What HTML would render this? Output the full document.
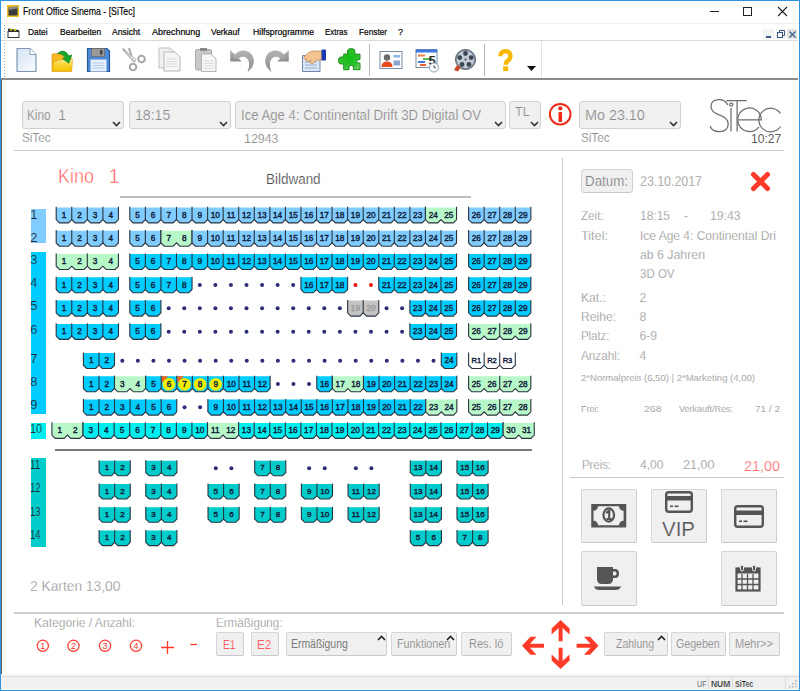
<!DOCTYPE html>
<html><head><meta charset="utf-8">
<style>
html,body{margin:0;padding:0;}
body{width:800px;height:691px;position:relative;overflow:hidden;background:#fff;font-family:"Liberation Sans",sans-serif;}
.a{position:absolute;}
.t{position:absolute;white-space:pre;line-height:1;}
.dd{position:absolute;background:#f0f0f0;border:1px solid #d0d0d0;border-radius:3px;box-sizing:border-box;}
.btn{position:absolute;background:#f0f0f0;border:1px solid #d6d6d6;border-bottom-color:#c8c8c8;border-right-color:#cecece;border-radius:2px;box-sizing:border-box;}
</style></head><body>
<!-- window border -->
<div class="a" style="left:0;top:0;width:800px;height:1px;background:#2a94e0"></div>
<div class="a" style="left:0;top:0;width:1px;height:691px;background:#2a94e0"></div>
<div class="a" style="left:799px;top:0;width:1px;height:691px;background:#2a94e0"></div>
<div class="a" style="left:0;top:690px;width:800px;height:1px;background:#2a94e0"></div>

<!-- title bar -->
<svg class="a" style="left:7px;top:5px" width="12" height="12" viewBox="0 0 12 12">
 <rect x="0" y="0" width="12" height="12" fill="#e8c020"/>
 <rect x="1.5" y="2.5" width="9" height="8" fill="#3a3a3a"/>
 <path d="M1.5,2.5 L10.5,1 L10.5,3.5 L1.5,5 Z" fill="#8a8a8a"/>
</svg>
<div class="a" style="left:710px;top:11px;width:9px;height:1px;background:#222"></div>
<div class="a" style="left:743px;top:7px;width:9px;height:9px;border:1px solid #222;box-sizing:border-box"></div>
<svg class="a" style="left:777px;top:6px" width="11" height="11" viewBox="0 0 11 11"><path d="M1,1 L10,10 M10,1 L1,10" stroke="#222" stroke-width="1.1"/></svg>

<!-- menu bar -->
<div class="a" style="left:1px;top:23px;width:797px;height:1px;background:#f0f0f0"></div>
<div class="a" style="left:4px;top:25px;width:1px;height:14px;background:repeating-linear-gradient(#a0a0a0 0 1px,transparent 1px 3px)"></div>
<svg class="a" style="left:7px;top:27px" width="13" height="11" viewBox="0 0 13 11">
 <rect x="1" y="4.5" width="11" height="6" fill="#fff" stroke="#333" stroke-width="1"/>
 <path d="M1,1.5 L12,3 L12,5 L1,4 Z" fill="#333"/>
 <rect x="3" y="1.5" width="2" height="2" fill="#d0c020"/><rect x="7" y="2" width="2" height="2" fill="#d0c020"/>
</svg>
<!-- mdi buttons -->
<div class="a" style="left:763px;top:29px;width:11px;height:10px;background:#f4f4f4"></div>
<div class="a" style="left:766px;top:36px;width:5px;height:1.5px;background:#3a5a8a"></div>
<div class="a" style="left:776px;top:29px;width:10px;height:10px;background:#f4f4f4"></div>
<svg class="a" style="left:777px;top:30px" width="8" height="8" viewBox="0 0 8 8"><rect x="0.5" y="2.5" width="5" height="5" fill="none" stroke="#3a5a8a"/><path d="M2.5,2.5 V0.5 H7.5 V5.5 H5.5" fill="none" stroke="#3a5a8a"/></svg>
<div class="a" style="left:787px;top:29px;width:10px;height:10px;background:#e2e2e2"></div>
<svg class="a" style="left:789px;top:31px" width="7" height="7" viewBox="0 0 7 7"><path d="M0.5,0.5 L6.5,6.5 M6.5,0.5 L0.5,6.5" stroke="#3a5a8a" stroke-width="1.2"/></svg>
<div class="a" style="left:1px;top:40px;width:797px;height:1px;background:#dadada"></div>

<!-- toolbar -->
<div class="a" style="left:4px;top:43px;width:1px;height:34px;background:repeating-linear-gradient(#a0a0a0 0 1px,transparent 1px 3px)"></div>
<div class="a" style="left:369px;top:44px;width:1px;height:32px;background:#b8b8b8"></div>
<div class="a" style="left:484px;top:44px;width:1px;height:32px;background:#b8b8b8"></div>
<svg class="a" style="left:527px;top:66px" width="9" height="5" viewBox="0 0 9 5"><path d="M0,0 H9 L4.5,5 Z" fill="#111"/></svg>
<div class="a" style="left:541px;top:41px;width:1px;height:37px;background:#e4e4e4"></div>
<div class="a" style="left:1px;top:78px;width:797px;height:2px;background:#8a8a8a"></div>
<div class="a" style="left:1px;top:80px;width:1px;height:594px;background:#6a6058"></div>

<!-- top selectors -->
<div class="dd" style="left:22px;top:101px;width:102px;height:28px"></div>
<div class="dd" style="left:129px;top:101px;width:102px;height:28px"></div>
<div class="dd" style="left:235px;top:101px;width:271px;height:28px"></div>
<div class="dd" style="left:509px;top:101px;width:32px;height:28px"></div>
<div class="dd" style="left:579px;top:101px;width:102px;height:28px"></div>
<svg class="a" style="left:548px;top:102px" width="25" height="25" viewBox="0 0 25 25">
 <circle cx="12.2" cy="12.2" r="10.3" fill="none" stroke="#ee2a1a" stroke-width="2"/>
 <circle cx="12.3" cy="6.4" r="2.1" fill="#ee2a1a"/>
 <rect x="10.5" y="10" width="3.6" height="10" fill="#ee2a1a"/>
</svg>
<svg class="a" style="left:708px;top:97px" width="78" height="38" viewBox="0 -1 78 38">
 <g fill="none" stroke="#6e6e6e" stroke-width="1.25">
  <path d="M19.8,7 Q17.5,1.5 11,1.5 Q3,1.5 3,8.5 Q3,14 11,16.8 Q20.2,19.8 20.2,25.8 Q20.2,33.6 11.2,33.6 Q4,33.6 2,28"/>
  <path d="M23,10 V33.6"/>
  <circle cx="23.3" cy="6.6" r="1.6"/>
  <path d="M18.4,2.6 H38.7 M29.1,2.6 V33.6"/>
  <path d="M29.7,21.8 H53.3 A11.8,11.8 0 1 0 51,28.8"/>
  <path d="M72.5,15.5 A11.8,11.8 0 1 0 72.5,28.5"/>
 </g>
</svg>
<div class="a" style="left:14px;top:150px;width:770px;height:1px;background:#c8c8c8"></div>
<div class="a" style="left:562px;top:158px;width:1px;height:447px;background:#c8c8c8"></div>

<!-- seat plan -->
<div class="a" style="left:120px;top:196px;width:351px;height:2px;background:#bcbcbc"></div>
<div class="a" style="left:31px;top:209px;width:15px;height:34px;background:#80ccff"></div>
<div class="a" style="left:31px;top:252px;width:15px;height:162px;background:#00ccff"></div>
<div class="a" style="left:31px;top:423px;width:15px;height:16px;background:#00eeee"></div>
<div class="a" style="left:31px;top:458px;width:15px;height:89px;background:#00cccc"></div>
<div class="a" style="left:55px;top:449px;width:477px;height:2px;background:#7a7a7a"></div>
<svg class="a" style="left:0;top:0" width="800" height="691" viewBox="0 0 800 691" font-family="Liberation Sans, sans-serif">
<polygon points="56.20,207.40 56.20,219.60 59.50,222.90 68.46,222.90 71.76,219.60 71.76,219.60 75.06,222.90 84.02,222.90 87.32,219.60 87.32,219.60 90.62,222.90 99.58,222.90 102.88,219.60 102.88,219.60 106.18,222.90 115.14,222.90 118.44,219.60 118.44,207.40" fill="#80ccff"/>
<path d="M56.20,206.80 L56.20,219.60 L59.50,222.90 L68.46,222.90 L71.76,219.60 L75.06,222.90 L84.02,222.90 L87.32,219.60 L90.62,222.90 L99.58,222.90 L102.88,219.60 L106.18,222.90 L115.14,222.90 L118.44,219.60 L118.44,206.80" fill="none" stroke="#2a3440" stroke-width="1.1"/>
<line x1="71.76" y1="206.80" x2="71.76" y2="219.60" stroke="#2a3440" stroke-width="1.1"/>
<line x1="87.32" y1="206.80" x2="87.32" y2="219.60" stroke="#2a3440" stroke-width="1.1"/>
<line x1="102.88" y1="206.80" x2="102.88" y2="219.60" stroke="#2a3440" stroke-width="1.1"/>
<text x="63.98" y="217.75" font-size="8.2" text-anchor="middle" fill="#10203a" stroke="#10203a" stroke-width="0.4">1</text>
<text x="79.54" y="217.75" font-size="8.2" text-anchor="middle" fill="#10203a" stroke="#10203a" stroke-width="0.4">2</text>
<text x="95.10" y="217.75" font-size="8.2" text-anchor="middle" fill="#10203a" stroke="#10203a" stroke-width="0.4">3</text>
<text x="110.66" y="217.75" font-size="8.2" text-anchor="middle" fill="#10203a" stroke="#10203a" stroke-width="0.4">4</text>
<polygon points="129.80,207.40 129.80,219.60 133.10,222.90 142.06,222.90 145.36,219.60 145.36,219.60 148.66,222.90 157.62,222.90 160.92,219.60 160.92,219.60 164.22,222.90 173.18,222.90 176.48,219.60 176.48,219.60 179.78,222.90 188.74,222.90 192.04,219.60 192.04,219.60 195.34,222.90 204.30,222.90 207.60,219.60 207.60,219.60 210.90,222.90 219.86,222.90 223.16,219.60 223.16,219.60 226.46,222.90 235.42,222.90 238.72,219.60 238.72,219.60 242.02,222.90 250.98,222.90 254.28,219.60 254.28,219.60 257.58,222.90 266.54,222.90 269.84,219.60 269.84,219.60 273.14,222.90 282.10,222.90 285.40,219.60 285.40,219.60 288.70,222.90 297.66,222.90 300.96,219.60 300.96,219.60 304.26,222.90 313.22,222.90 316.52,219.60 316.52,219.60 319.82,222.90 328.78,222.90 332.08,219.60 332.08,219.60 335.38,222.90 344.34,222.90 347.64,219.60 347.64,219.60 350.94,222.90 359.90,222.90 363.20,219.60 363.20,219.60 366.50,222.90 375.46,222.90 378.76,219.60 378.76,219.60 382.06,222.90 391.02,222.90 394.32,219.60 394.32,219.60 397.62,222.90 406.58,222.90 409.88,219.60 409.88,219.60 413.18,222.90 422.14,222.90 425.44,219.60 425.44,207.40" fill="#80ccff"/>
<path d="M129.80,206.80 L129.80,219.60 L133.10,222.90 L142.06,222.90 L145.36,219.60 L148.66,222.90 L157.62,222.90 L160.92,219.60 L164.22,222.90 L173.18,222.90 L176.48,219.60 L179.78,222.90 L188.74,222.90 L192.04,219.60 L195.34,222.90 L204.30,222.90 L207.60,219.60 L210.90,222.90 L219.86,222.90 L223.16,219.60 L226.46,222.90 L235.42,222.90 L238.72,219.60 L242.02,222.90 L250.98,222.90 L254.28,219.60 L257.58,222.90 L266.54,222.90 L269.84,219.60 L273.14,222.90 L282.10,222.90 L285.40,219.60 L288.70,222.90 L297.66,222.90 L300.96,219.60 L304.26,222.90 L313.22,222.90 L316.52,219.60 L319.82,222.90 L328.78,222.90 L332.08,219.60 L335.38,222.90 L344.34,222.90 L347.64,219.60 L350.94,222.90 L359.90,222.90 L363.20,219.60 L366.50,222.90 L375.46,222.90 L378.76,219.60 L382.06,222.90 L391.02,222.90 L394.32,219.60 L397.62,222.90 L406.58,222.90 L409.88,219.60 L413.18,222.90 L422.14,222.90 L425.44,219.60 L425.44,206.80" fill="none" stroke="#2a3440" stroke-width="1.1"/>
<line x1="145.36" y1="206.80" x2="145.36" y2="219.60" stroke="#2a3440" stroke-width="1.1"/>
<line x1="160.92" y1="206.80" x2="160.92" y2="219.60" stroke="#2a3440" stroke-width="1.1"/>
<line x1="176.48" y1="206.80" x2="176.48" y2="219.60" stroke="#2a3440" stroke-width="1.1"/>
<line x1="192.04" y1="206.80" x2="192.04" y2="219.60" stroke="#2a3440" stroke-width="1.1"/>
<line x1="207.60" y1="206.80" x2="207.60" y2="219.60" stroke="#2a3440" stroke-width="1.1"/>
<line x1="223.16" y1="206.80" x2="223.16" y2="219.60" stroke="#2a3440" stroke-width="1.1"/>
<line x1="238.72" y1="206.80" x2="238.72" y2="219.60" stroke="#2a3440" stroke-width="1.1"/>
<line x1="254.28" y1="206.80" x2="254.28" y2="219.60" stroke="#2a3440" stroke-width="1.1"/>
<line x1="269.84" y1="206.80" x2="269.84" y2="219.60" stroke="#2a3440" stroke-width="1.1"/>
<line x1="285.40" y1="206.80" x2="285.40" y2="219.60" stroke="#2a3440" stroke-width="1.1"/>
<line x1="300.96" y1="206.80" x2="300.96" y2="219.60" stroke="#2a3440" stroke-width="1.1"/>
<line x1="316.52" y1="206.80" x2="316.52" y2="219.60" stroke="#2a3440" stroke-width="1.1"/>
<line x1="332.08" y1="206.80" x2="332.08" y2="219.60" stroke="#2a3440" stroke-width="1.1"/>
<line x1="347.64" y1="206.80" x2="347.64" y2="219.60" stroke="#2a3440" stroke-width="1.1"/>
<line x1="363.20" y1="206.80" x2="363.20" y2="219.60" stroke="#2a3440" stroke-width="1.1"/>
<line x1="378.76" y1="206.80" x2="378.76" y2="219.60" stroke="#2a3440" stroke-width="1.1"/>
<line x1="394.32" y1="206.80" x2="394.32" y2="219.60" stroke="#2a3440" stroke-width="1.1"/>
<line x1="409.88" y1="206.80" x2="409.88" y2="219.60" stroke="#2a3440" stroke-width="1.1"/>
<text x="137.58" y="217.75" font-size="8.2" text-anchor="middle" fill="#10203a" stroke="#10203a" stroke-width="0.4">5</text>
<text x="153.14" y="217.75" font-size="8.2" text-anchor="middle" fill="#10203a" stroke="#10203a" stroke-width="0.4">6</text>
<text x="168.70" y="217.75" font-size="8.2" text-anchor="middle" fill="#10203a" stroke="#10203a" stroke-width="0.4">7</text>
<text x="184.26" y="217.75" font-size="8.2" text-anchor="middle" fill="#10203a" stroke="#10203a" stroke-width="0.4">8</text>
<text x="199.82" y="217.75" font-size="8.2" text-anchor="middle" fill="#10203a" stroke="#10203a" stroke-width="0.4">9</text>
<text x="215.38" y="217.75" font-size="8.2" text-anchor="middle" fill="#10203a" stroke="#10203a" stroke-width="0.4">10</text>
<text x="230.94" y="217.75" font-size="8.2" text-anchor="middle" fill="#10203a" stroke="#10203a" stroke-width="0.4">11</text>
<text x="246.50" y="217.75" font-size="8.2" text-anchor="middle" fill="#10203a" stroke="#10203a" stroke-width="0.4">12</text>
<text x="262.06" y="217.75" font-size="8.2" text-anchor="middle" fill="#10203a" stroke="#10203a" stroke-width="0.4">13</text>
<text x="277.62" y="217.75" font-size="8.2" text-anchor="middle" fill="#10203a" stroke="#10203a" stroke-width="0.4">14</text>
<text x="293.18" y="217.75" font-size="8.2" text-anchor="middle" fill="#10203a" stroke="#10203a" stroke-width="0.4">15</text>
<text x="308.74" y="217.75" font-size="8.2" text-anchor="middle" fill="#10203a" stroke="#10203a" stroke-width="0.4">16</text>
<text x="324.30" y="217.75" font-size="8.2" text-anchor="middle" fill="#10203a" stroke="#10203a" stroke-width="0.4">17</text>
<text x="339.86" y="217.75" font-size="8.2" text-anchor="middle" fill="#10203a" stroke="#10203a" stroke-width="0.4">18</text>
<text x="355.42" y="217.75" font-size="8.2" text-anchor="middle" fill="#10203a" stroke="#10203a" stroke-width="0.4">19</text>
<text x="370.98" y="217.75" font-size="8.2" text-anchor="middle" fill="#10203a" stroke="#10203a" stroke-width="0.4">20</text>
<text x="386.54" y="217.75" font-size="8.2" text-anchor="middle" fill="#10203a" stroke="#10203a" stroke-width="0.4">21</text>
<text x="402.10" y="217.75" font-size="8.2" text-anchor="middle" fill="#10203a" stroke="#10203a" stroke-width="0.4">22</text>
<text x="417.66" y="217.75" font-size="8.2" text-anchor="middle" fill="#10203a" stroke="#10203a" stroke-width="0.4">23</text>
<polygon points="425.44,207.40 425.44,219.60 428.74,222.90 437.70,222.90 441.00,219.60 441.00,219.60 444.30,222.90 453.26,222.90 456.56,219.60 456.56,207.40" fill="#b8f8c8"/>
<path d="M425.44,206.80 L425.44,219.60 L428.74,222.90 L437.70,222.90 L441.00,219.60 L444.30,222.90 L453.26,222.90 L456.56,219.60 L456.56,206.80" fill="none" stroke="#2a3440" stroke-width="1.1"/>
<text x="433.22" y="217.75" font-size="8.2" text-anchor="middle" fill="#10203a" stroke="#10203a" stroke-width="0.4">24</text>
<text x="448.78" y="217.75" font-size="8.2" text-anchor="middle" fill="#10203a" stroke="#10203a" stroke-width="0.4">25</text>
<polygon points="468.60,207.40 468.60,219.60 471.90,222.90 480.86,222.90 484.16,219.60 484.16,219.60 487.46,222.90 496.42,222.90 499.72,219.60 499.72,219.60 503.02,222.90 511.98,222.90 515.28,219.60 515.28,219.60 518.58,222.90 527.54,222.90 530.84,219.60 530.84,207.40" fill="#80ccff"/>
<path d="M468.60,206.80 L468.60,219.60 L471.90,222.90 L480.86,222.90 L484.16,219.60 L487.46,222.90 L496.42,222.90 L499.72,219.60 L503.02,222.90 L511.98,222.90 L515.28,219.60 L518.58,222.90 L527.54,222.90 L530.84,219.60 L530.84,206.80" fill="none" stroke="#2a3440" stroke-width="1.1"/>
<line x1="484.16" y1="206.80" x2="484.16" y2="219.60" stroke="#2a3440" stroke-width="1.1"/>
<line x1="499.72" y1="206.80" x2="499.72" y2="219.60" stroke="#2a3440" stroke-width="1.1"/>
<line x1="515.28" y1="206.80" x2="515.28" y2="219.60" stroke="#2a3440" stroke-width="1.1"/>
<text x="476.38" y="217.75" font-size="8.2" text-anchor="middle" fill="#10203a" stroke="#10203a" stroke-width="0.4">26</text>
<text x="491.94" y="217.75" font-size="8.2" text-anchor="middle" fill="#10203a" stroke="#10203a" stroke-width="0.4">27</text>
<text x="507.50" y="217.75" font-size="8.2" text-anchor="middle" fill="#10203a" stroke="#10203a" stroke-width="0.4">28</text>
<text x="523.06" y="217.75" font-size="8.2" text-anchor="middle" fill="#10203a" stroke="#10203a" stroke-width="0.4">29</text>
<polygon points="56.20,230.70 56.20,242.90 59.50,246.20 68.46,246.20 71.76,242.90 71.76,242.90 75.06,246.20 84.02,246.20 87.32,242.90 87.32,242.90 90.62,246.20 99.58,246.20 102.88,242.90 102.88,242.90 106.18,246.20 115.14,246.20 118.44,242.90 118.44,230.70" fill="#80ccff"/>
<path d="M56.20,230.10 L56.20,242.90 L59.50,246.20 L68.46,246.20 L71.76,242.90 L75.06,246.20 L84.02,246.20 L87.32,242.90 L90.62,246.20 L99.58,246.20 L102.88,242.90 L106.18,246.20 L115.14,246.20 L118.44,242.90 L118.44,230.10" fill="none" stroke="#2a3440" stroke-width="1.1"/>
<line x1="71.76" y1="230.10" x2="71.76" y2="242.90" stroke="#2a3440" stroke-width="1.1"/>
<line x1="87.32" y1="230.10" x2="87.32" y2="242.90" stroke="#2a3440" stroke-width="1.1"/>
<line x1="102.88" y1="230.10" x2="102.88" y2="242.90" stroke="#2a3440" stroke-width="1.1"/>
<text x="63.98" y="241.05" font-size="8.2" text-anchor="middle" fill="#10203a" stroke="#10203a" stroke-width="0.4">1</text>
<text x="79.54" y="241.05" font-size="8.2" text-anchor="middle" fill="#10203a" stroke="#10203a" stroke-width="0.4">2</text>
<text x="95.10" y="241.05" font-size="8.2" text-anchor="middle" fill="#10203a" stroke="#10203a" stroke-width="0.4">3</text>
<text x="110.66" y="241.05" font-size="8.2" text-anchor="middle" fill="#10203a" stroke="#10203a" stroke-width="0.4">4</text>
<polygon points="129.80,230.70 129.80,242.90 133.10,246.20 142.06,246.20 145.36,242.90 145.36,242.90 148.66,246.20 157.62,246.20 160.92,242.90 160.92,230.70" fill="#80ccff"/>
<path d="M129.80,230.10 L129.80,242.90 L133.10,246.20 L142.06,246.20 L145.36,242.90 L148.66,246.20 L157.62,246.20 L160.92,242.90 L160.92,230.10" fill="none" stroke="#2a3440" stroke-width="1.1"/>
<line x1="145.36" y1="230.10" x2="145.36" y2="242.90" stroke="#2a3440" stroke-width="1.1"/>
<text x="137.58" y="241.05" font-size="8.2" text-anchor="middle" fill="#10203a" stroke="#10203a" stroke-width="0.4">5</text>
<text x="153.14" y="241.05" font-size="8.2" text-anchor="middle" fill="#10203a" stroke="#10203a" stroke-width="0.4">6</text>
<polygon points="160.92,230.70 160.92,242.90 164.22,246.20 173.18,246.20 176.48,242.90 176.48,242.90 179.78,246.20 188.74,246.20 192.04,242.90 192.04,230.70" fill="#b8f8c8"/>
<path d="M160.92,230.10 L160.92,242.90 L164.22,246.20 L173.18,246.20 L176.48,242.90 L179.78,246.20 L188.74,246.20 L192.04,242.90 L192.04,230.10" fill="none" stroke="#2a3440" stroke-width="1.1"/>
<text x="168.70" y="241.05" font-size="8.2" text-anchor="middle" fill="#10203a" stroke="#10203a" stroke-width="0.4">7</text>
<text x="184.26" y="241.05" font-size="8.2" text-anchor="middle" fill="#10203a" stroke="#10203a" stroke-width="0.4">8</text>
<polygon points="192.04,230.70 192.04,242.90 195.34,246.20 204.30,246.20 207.60,242.90 207.60,242.90 210.90,246.20 219.86,246.20 223.16,242.90 223.16,242.90 226.46,246.20 235.42,246.20 238.72,242.90 238.72,242.90 242.02,246.20 250.98,246.20 254.28,242.90 254.28,242.90 257.58,246.20 266.54,246.20 269.84,242.90 269.84,242.90 273.14,246.20 282.10,246.20 285.40,242.90 285.40,242.90 288.70,246.20 297.66,246.20 300.96,242.90 300.96,242.90 304.26,246.20 313.22,246.20 316.52,242.90 316.52,242.90 319.82,246.20 328.78,246.20 332.08,242.90 332.08,242.90 335.38,246.20 344.34,246.20 347.64,242.90 347.64,242.90 350.94,246.20 359.90,246.20 363.20,242.90 363.20,242.90 366.50,246.20 375.46,246.20 378.76,242.90 378.76,242.90 382.06,246.20 391.02,246.20 394.32,242.90 394.32,242.90 397.62,246.20 406.58,246.20 409.88,242.90 409.88,242.90 413.18,246.20 422.14,246.20 425.44,242.90 425.44,242.90 428.74,246.20 437.70,246.20 441.00,242.90 441.00,242.90 444.30,246.20 453.26,246.20 456.56,242.90 456.56,230.70" fill="#80ccff"/>
<path d="M192.04,230.10 L192.04,242.90 L195.34,246.20 L204.30,246.20 L207.60,242.90 L210.90,246.20 L219.86,246.20 L223.16,242.90 L226.46,246.20 L235.42,246.20 L238.72,242.90 L242.02,246.20 L250.98,246.20 L254.28,242.90 L257.58,246.20 L266.54,246.20 L269.84,242.90 L273.14,246.20 L282.10,246.20 L285.40,242.90 L288.70,246.20 L297.66,246.20 L300.96,242.90 L304.26,246.20 L313.22,246.20 L316.52,242.90 L319.82,246.20 L328.78,246.20 L332.08,242.90 L335.38,246.20 L344.34,246.20 L347.64,242.90 L350.94,246.20 L359.90,246.20 L363.20,242.90 L366.50,246.20 L375.46,246.20 L378.76,242.90 L382.06,246.20 L391.02,246.20 L394.32,242.90 L397.62,246.20 L406.58,246.20 L409.88,242.90 L413.18,246.20 L422.14,246.20 L425.44,242.90 L428.74,246.20 L437.70,246.20 L441.00,242.90 L444.30,246.20 L453.26,246.20 L456.56,242.90 L456.56,230.10" fill="none" stroke="#2a3440" stroke-width="1.1"/>
<line x1="207.60" y1="230.10" x2="207.60" y2="242.90" stroke="#2a3440" stroke-width="1.1"/>
<line x1="223.16" y1="230.10" x2="223.16" y2="242.90" stroke="#2a3440" stroke-width="1.1"/>
<line x1="238.72" y1="230.10" x2="238.72" y2="242.90" stroke="#2a3440" stroke-width="1.1"/>
<line x1="254.28" y1="230.10" x2="254.28" y2="242.90" stroke="#2a3440" stroke-width="1.1"/>
<line x1="269.84" y1="230.10" x2="269.84" y2="242.90" stroke="#2a3440" stroke-width="1.1"/>
<line x1="285.40" y1="230.10" x2="285.40" y2="242.90" stroke="#2a3440" stroke-width="1.1"/>
<line x1="300.96" y1="230.10" x2="300.96" y2="242.90" stroke="#2a3440" stroke-width="1.1"/>
<line x1="316.52" y1="230.10" x2="316.52" y2="242.90" stroke="#2a3440" stroke-width="1.1"/>
<line x1="332.08" y1="230.10" x2="332.08" y2="242.90" stroke="#2a3440" stroke-width="1.1"/>
<line x1="347.64" y1="230.10" x2="347.64" y2="242.90" stroke="#2a3440" stroke-width="1.1"/>
<line x1="363.20" y1="230.10" x2="363.20" y2="242.90" stroke="#2a3440" stroke-width="1.1"/>
<line x1="378.76" y1="230.10" x2="378.76" y2="242.90" stroke="#2a3440" stroke-width="1.1"/>
<line x1="394.32" y1="230.10" x2="394.32" y2="242.90" stroke="#2a3440" stroke-width="1.1"/>
<line x1="409.88" y1="230.10" x2="409.88" y2="242.90" stroke="#2a3440" stroke-width="1.1"/>
<line x1="425.44" y1="230.10" x2="425.44" y2="242.90" stroke="#2a3440" stroke-width="1.1"/>
<line x1="441.00" y1="230.10" x2="441.00" y2="242.90" stroke="#2a3440" stroke-width="1.1"/>
<text x="199.82" y="241.05" font-size="8.2" text-anchor="middle" fill="#10203a" stroke="#10203a" stroke-width="0.4">9</text>
<text x="215.38" y="241.05" font-size="8.2" text-anchor="middle" fill="#10203a" stroke="#10203a" stroke-width="0.4">10</text>
<text x="230.94" y="241.05" font-size="8.2" text-anchor="middle" fill="#10203a" stroke="#10203a" stroke-width="0.4">11</text>
<text x="246.50" y="241.05" font-size="8.2" text-anchor="middle" fill="#10203a" stroke="#10203a" stroke-width="0.4">12</text>
<text x="262.06" y="241.05" font-size="8.2" text-anchor="middle" fill="#10203a" stroke="#10203a" stroke-width="0.4">13</text>
<text x="277.62" y="241.05" font-size="8.2" text-anchor="middle" fill="#10203a" stroke="#10203a" stroke-width="0.4">14</text>
<text x="293.18" y="241.05" font-size="8.2" text-anchor="middle" fill="#10203a" stroke="#10203a" stroke-width="0.4">15</text>
<text x="308.74" y="241.05" font-size="8.2" text-anchor="middle" fill="#10203a" stroke="#10203a" stroke-width="0.4">16</text>
<text x="324.30" y="241.05" font-size="8.2" text-anchor="middle" fill="#10203a" stroke="#10203a" stroke-width="0.4">17</text>
<text x="339.86" y="241.05" font-size="8.2" text-anchor="middle" fill="#10203a" stroke="#10203a" stroke-width="0.4">18</text>
<text x="355.42" y="241.05" font-size="8.2" text-anchor="middle" fill="#10203a" stroke="#10203a" stroke-width="0.4">19</text>
<text x="370.98" y="241.05" font-size="8.2" text-anchor="middle" fill="#10203a" stroke="#10203a" stroke-width="0.4">20</text>
<text x="386.54" y="241.05" font-size="8.2" text-anchor="middle" fill="#10203a" stroke="#10203a" stroke-width="0.4">21</text>
<text x="402.10" y="241.05" font-size="8.2" text-anchor="middle" fill="#10203a" stroke="#10203a" stroke-width="0.4">22</text>
<text x="417.66" y="241.05" font-size="8.2" text-anchor="middle" fill="#10203a" stroke="#10203a" stroke-width="0.4">23</text>
<text x="433.22" y="241.05" font-size="8.2" text-anchor="middle" fill="#10203a" stroke="#10203a" stroke-width="0.4">24</text>
<text x="448.78" y="241.05" font-size="8.2" text-anchor="middle" fill="#10203a" stroke="#10203a" stroke-width="0.4">25</text>
<polygon points="468.60,230.70 468.60,242.90 471.90,246.20 480.86,246.20 484.16,242.90 484.16,242.90 487.46,246.20 496.42,246.20 499.72,242.90 499.72,242.90 503.02,246.20 511.98,246.20 515.28,242.90 515.28,242.90 518.58,246.20 527.54,246.20 530.84,242.90 530.84,230.70" fill="#80ccff"/>
<path d="M468.60,230.10 L468.60,242.90 L471.90,246.20 L480.86,246.20 L484.16,242.90 L487.46,246.20 L496.42,246.20 L499.72,242.90 L503.02,246.20 L511.98,246.20 L515.28,242.90 L518.58,246.20 L527.54,246.20 L530.84,242.90 L530.84,230.10" fill="none" stroke="#2a3440" stroke-width="1.1"/>
<line x1="484.16" y1="230.10" x2="484.16" y2="242.90" stroke="#2a3440" stroke-width="1.1"/>
<line x1="499.72" y1="230.10" x2="499.72" y2="242.90" stroke="#2a3440" stroke-width="1.1"/>
<line x1="515.28" y1="230.10" x2="515.28" y2="242.90" stroke="#2a3440" stroke-width="1.1"/>
<text x="476.38" y="241.05" font-size="8.2" text-anchor="middle" fill="#10203a" stroke="#10203a" stroke-width="0.4">26</text>
<text x="491.94" y="241.05" font-size="8.2" text-anchor="middle" fill="#10203a" stroke="#10203a" stroke-width="0.4">27</text>
<text x="507.50" y="241.05" font-size="8.2" text-anchor="middle" fill="#10203a" stroke="#10203a" stroke-width="0.4">28</text>
<text x="523.06" y="241.05" font-size="8.2" text-anchor="middle" fill="#10203a" stroke="#10203a" stroke-width="0.4">29</text>
<polygon points="56.20,254.00 56.20,266.20 59.50,269.50 68.46,269.50 71.76,266.20 71.76,266.20 75.06,269.50 84.02,269.50 87.32,266.20 87.32,266.20 90.62,269.50 99.58,269.50 102.88,266.20 102.88,266.20 106.18,269.50 115.14,269.50 118.44,266.20 118.44,254.00" fill="#b8f8c8"/>
<path d="M56.20,253.40 L56.20,266.20 L59.50,269.50 L68.46,269.50 L71.76,266.20 L75.06,269.50 L84.02,269.50 L87.32,266.20 L90.62,269.50 L99.58,269.50 L102.88,266.20 L106.18,269.50 L115.14,269.50 L118.44,266.20 L118.44,253.40" fill="none" stroke="#2a3440" stroke-width="1.1"/>
<line x1="87.32" y1="253.40" x2="87.32" y2="266.20" stroke="#2a3440" stroke-width="1.1"/>
<text x="63.98" y="264.35" font-size="8.2" text-anchor="middle" fill="#10203a" stroke="#10203a" stroke-width="0.4">1</text>
<text x="79.54" y="264.35" font-size="8.2" text-anchor="middle" fill="#10203a" stroke="#10203a" stroke-width="0.4">2</text>
<text x="95.10" y="264.35" font-size="8.2" text-anchor="middle" fill="#10203a" stroke="#10203a" stroke-width="0.4">3</text>
<text x="110.66" y="264.35" font-size="8.2" text-anchor="middle" fill="#10203a" stroke="#10203a" stroke-width="0.4">4</text>
<polygon points="129.80,254.00 129.80,266.20 133.10,269.50 142.06,269.50 145.36,266.20 145.36,266.20 148.66,269.50 157.62,269.50 160.92,266.20 160.92,266.20 164.22,269.50 173.18,269.50 176.48,266.20 176.48,266.20 179.78,269.50 188.74,269.50 192.04,266.20 192.04,266.20 195.34,269.50 204.30,269.50 207.60,266.20 207.60,266.20 210.90,269.50 219.86,269.50 223.16,266.20 223.16,266.20 226.46,269.50 235.42,269.50 238.72,266.20 238.72,266.20 242.02,269.50 250.98,269.50 254.28,266.20 254.28,266.20 257.58,269.50 266.54,269.50 269.84,266.20 269.84,266.20 273.14,269.50 282.10,269.50 285.40,266.20 285.40,266.20 288.70,269.50 297.66,269.50 300.96,266.20 300.96,266.20 304.26,269.50 313.22,269.50 316.52,266.20 316.52,266.20 319.82,269.50 328.78,269.50 332.08,266.20 332.08,266.20 335.38,269.50 344.34,269.50 347.64,266.20 347.64,266.20 350.94,269.50 359.90,269.50 363.20,266.20 363.20,266.20 366.50,269.50 375.46,269.50 378.76,266.20 378.76,266.20 382.06,269.50 391.02,269.50 394.32,266.20 394.32,266.20 397.62,269.50 406.58,269.50 409.88,266.20 409.88,266.20 413.18,269.50 422.14,269.50 425.44,266.20 425.44,266.20 428.74,269.50 437.70,269.50 441.00,266.20 441.00,266.20 444.30,269.50 453.26,269.50 456.56,266.20 456.56,254.00" fill="#00ccff"/>
<path d="M129.80,253.40 L129.80,266.20 L133.10,269.50 L142.06,269.50 L145.36,266.20 L148.66,269.50 L157.62,269.50 L160.92,266.20 L164.22,269.50 L173.18,269.50 L176.48,266.20 L179.78,269.50 L188.74,269.50 L192.04,266.20 L195.34,269.50 L204.30,269.50 L207.60,266.20 L210.90,269.50 L219.86,269.50 L223.16,266.20 L226.46,269.50 L235.42,269.50 L238.72,266.20 L242.02,269.50 L250.98,269.50 L254.28,266.20 L257.58,269.50 L266.54,269.50 L269.84,266.20 L273.14,269.50 L282.10,269.50 L285.40,266.20 L288.70,269.50 L297.66,269.50 L300.96,266.20 L304.26,269.50 L313.22,269.50 L316.52,266.20 L319.82,269.50 L328.78,269.50 L332.08,266.20 L335.38,269.50 L344.34,269.50 L347.64,266.20 L350.94,269.50 L359.90,269.50 L363.20,266.20 L366.50,269.50 L375.46,269.50 L378.76,266.20 L382.06,269.50 L391.02,269.50 L394.32,266.20 L397.62,269.50 L406.58,269.50 L409.88,266.20 L413.18,269.50 L422.14,269.50 L425.44,266.20 L428.74,269.50 L437.70,269.50 L441.00,266.20 L444.30,269.50 L453.26,269.50 L456.56,266.20 L456.56,253.40" fill="none" stroke="#2a3440" stroke-width="1.1"/>
<line x1="145.36" y1="253.40" x2="145.36" y2="266.20" stroke="#2a3440" stroke-width="1.1"/>
<line x1="160.92" y1="253.40" x2="160.92" y2="266.20" stroke="#2a3440" stroke-width="1.1"/>
<line x1="176.48" y1="253.40" x2="176.48" y2="266.20" stroke="#2a3440" stroke-width="1.1"/>
<line x1="192.04" y1="253.40" x2="192.04" y2="266.20" stroke="#2a3440" stroke-width="1.1"/>
<line x1="207.60" y1="253.40" x2="207.60" y2="266.20" stroke="#2a3440" stroke-width="1.1"/>
<line x1="223.16" y1="253.40" x2="223.16" y2="266.20" stroke="#2a3440" stroke-width="1.1"/>
<line x1="238.72" y1="253.40" x2="238.72" y2="266.20" stroke="#2a3440" stroke-width="1.1"/>
<line x1="254.28" y1="253.40" x2="254.28" y2="266.20" stroke="#2a3440" stroke-width="1.1"/>
<line x1="269.84" y1="253.40" x2="269.84" y2="266.20" stroke="#2a3440" stroke-width="1.1"/>
<line x1="285.40" y1="253.40" x2="285.40" y2="266.20" stroke="#2a3440" stroke-width="1.1"/>
<line x1="300.96" y1="253.40" x2="300.96" y2="266.20" stroke="#2a3440" stroke-width="1.1"/>
<line x1="316.52" y1="253.40" x2="316.52" y2="266.20" stroke="#2a3440" stroke-width="1.1"/>
<line x1="332.08" y1="253.40" x2="332.08" y2="266.20" stroke="#2a3440" stroke-width="1.1"/>
<line x1="347.64" y1="253.40" x2="347.64" y2="266.20" stroke="#2a3440" stroke-width="1.1"/>
<line x1="363.20" y1="253.40" x2="363.20" y2="266.20" stroke="#2a3440" stroke-width="1.1"/>
<line x1="378.76" y1="253.40" x2="378.76" y2="266.20" stroke="#2a3440" stroke-width="1.1"/>
<line x1="394.32" y1="253.40" x2="394.32" y2="266.20" stroke="#2a3440" stroke-width="1.1"/>
<line x1="409.88" y1="253.40" x2="409.88" y2="266.20" stroke="#2a3440" stroke-width="1.1"/>
<line x1="425.44" y1="253.40" x2="425.44" y2="266.20" stroke="#2a3440" stroke-width="1.1"/>
<line x1="441.00" y1="253.40" x2="441.00" y2="266.20" stroke="#2a3440" stroke-width="1.1"/>
<text x="137.58" y="264.35" font-size="8.2" text-anchor="middle" fill="#10203a" stroke="#10203a" stroke-width="0.4">5</text>
<text x="153.14" y="264.35" font-size="8.2" text-anchor="middle" fill="#10203a" stroke="#10203a" stroke-width="0.4">6</text>
<text x="168.70" y="264.35" font-size="8.2" text-anchor="middle" fill="#10203a" stroke="#10203a" stroke-width="0.4">7</text>
<text x="184.26" y="264.35" font-size="8.2" text-anchor="middle" fill="#10203a" stroke="#10203a" stroke-width="0.4">8</text>
<text x="199.82" y="264.35" font-size="8.2" text-anchor="middle" fill="#10203a" stroke="#10203a" stroke-width="0.4">9</text>
<text x="215.38" y="264.35" font-size="8.2" text-anchor="middle" fill="#10203a" stroke="#10203a" stroke-width="0.4">10</text>
<text x="230.94" y="264.35" font-size="8.2" text-anchor="middle" fill="#10203a" stroke="#10203a" stroke-width="0.4">11</text>
<text x="246.50" y="264.35" font-size="8.2" text-anchor="middle" fill="#10203a" stroke="#10203a" stroke-width="0.4">12</text>
<text x="262.06" y="264.35" font-size="8.2" text-anchor="middle" fill="#10203a" stroke="#10203a" stroke-width="0.4">13</text>
<text x="277.62" y="264.35" font-size="8.2" text-anchor="middle" fill="#10203a" stroke="#10203a" stroke-width="0.4">14</text>
<text x="293.18" y="264.35" font-size="8.2" text-anchor="middle" fill="#10203a" stroke="#10203a" stroke-width="0.4">15</text>
<text x="308.74" y="264.35" font-size="8.2" text-anchor="middle" fill="#10203a" stroke="#10203a" stroke-width="0.4">16</text>
<text x="324.30" y="264.35" font-size="8.2" text-anchor="middle" fill="#10203a" stroke="#10203a" stroke-width="0.4">17</text>
<text x="339.86" y="264.35" font-size="8.2" text-anchor="middle" fill="#10203a" stroke="#10203a" stroke-width="0.4">18</text>
<text x="355.42" y="264.35" font-size="8.2" text-anchor="middle" fill="#10203a" stroke="#10203a" stroke-width="0.4">19</text>
<text x="370.98" y="264.35" font-size="8.2" text-anchor="middle" fill="#10203a" stroke="#10203a" stroke-width="0.4">20</text>
<text x="386.54" y="264.35" font-size="8.2" text-anchor="middle" fill="#10203a" stroke="#10203a" stroke-width="0.4">21</text>
<text x="402.10" y="264.35" font-size="8.2" text-anchor="middle" fill="#10203a" stroke="#10203a" stroke-width="0.4">22</text>
<text x="417.66" y="264.35" font-size="8.2" text-anchor="middle" fill="#10203a" stroke="#10203a" stroke-width="0.4">23</text>
<text x="433.22" y="264.35" font-size="8.2" text-anchor="middle" fill="#10203a" stroke="#10203a" stroke-width="0.4">24</text>
<text x="448.78" y="264.35" font-size="8.2" text-anchor="middle" fill="#10203a" stroke="#10203a" stroke-width="0.4">25</text>
<polygon points="468.60,254.00 468.60,266.20 471.90,269.50 480.86,269.50 484.16,266.20 484.16,266.20 487.46,269.50 496.42,269.50 499.72,266.20 499.72,266.20 503.02,269.50 511.98,269.50 515.28,266.20 515.28,266.20 518.58,269.50 527.54,269.50 530.84,266.20 530.84,254.00" fill="#00ccff"/>
<path d="M468.60,253.40 L468.60,266.20 L471.90,269.50 L480.86,269.50 L484.16,266.20 L487.46,269.50 L496.42,269.50 L499.72,266.20 L503.02,269.50 L511.98,269.50 L515.28,266.20 L518.58,269.50 L527.54,269.50 L530.84,266.20 L530.84,253.40" fill="none" stroke="#2a3440" stroke-width="1.1"/>
<line x1="484.16" y1="253.40" x2="484.16" y2="266.20" stroke="#2a3440" stroke-width="1.1"/>
<line x1="499.72" y1="253.40" x2="499.72" y2="266.20" stroke="#2a3440" stroke-width="1.1"/>
<line x1="515.28" y1="253.40" x2="515.28" y2="266.20" stroke="#2a3440" stroke-width="1.1"/>
<text x="476.38" y="264.35" font-size="8.2" text-anchor="middle" fill="#10203a" stroke="#10203a" stroke-width="0.4">26</text>
<text x="491.94" y="264.35" font-size="8.2" text-anchor="middle" fill="#10203a" stroke="#10203a" stroke-width="0.4">27</text>
<text x="507.50" y="264.35" font-size="8.2" text-anchor="middle" fill="#10203a" stroke="#10203a" stroke-width="0.4">28</text>
<text x="523.06" y="264.35" font-size="8.2" text-anchor="middle" fill="#10203a" stroke="#10203a" stroke-width="0.4">29</text>
<polygon points="56.20,277.30 56.20,289.50 59.50,292.80 68.46,292.80 71.76,289.50 71.76,289.50 75.06,292.80 84.02,292.80 87.32,289.50 87.32,289.50 90.62,292.80 99.58,292.80 102.88,289.50 102.88,289.50 106.18,292.80 115.14,292.80 118.44,289.50 118.44,277.30" fill="#00ccff"/>
<path d="M56.20,276.70 L56.20,289.50 L59.50,292.80 L68.46,292.80 L71.76,289.50 L75.06,292.80 L84.02,292.80 L87.32,289.50 L90.62,292.80 L99.58,292.80 L102.88,289.50 L106.18,292.80 L115.14,292.80 L118.44,289.50 L118.44,276.70" fill="none" stroke="#2a3440" stroke-width="1.1"/>
<line x1="71.76" y1="276.70" x2="71.76" y2="289.50" stroke="#2a3440" stroke-width="1.1"/>
<line x1="87.32" y1="276.70" x2="87.32" y2="289.50" stroke="#2a3440" stroke-width="1.1"/>
<line x1="102.88" y1="276.70" x2="102.88" y2="289.50" stroke="#2a3440" stroke-width="1.1"/>
<text x="63.98" y="287.65" font-size="8.2" text-anchor="middle" fill="#10203a" stroke="#10203a" stroke-width="0.4">1</text>
<text x="79.54" y="287.65" font-size="8.2" text-anchor="middle" fill="#10203a" stroke="#10203a" stroke-width="0.4">2</text>
<text x="95.10" y="287.65" font-size="8.2" text-anchor="middle" fill="#10203a" stroke="#10203a" stroke-width="0.4">3</text>
<text x="110.66" y="287.65" font-size="8.2" text-anchor="middle" fill="#10203a" stroke="#10203a" stroke-width="0.4">4</text>
<polygon points="129.80,277.30 129.80,289.50 133.10,292.80 142.06,292.80 145.36,289.50 145.36,289.50 148.66,292.80 157.62,292.80 160.92,289.50 160.92,289.50 164.22,292.80 173.18,292.80 176.48,289.50 176.48,289.50 179.78,292.80 188.74,292.80 192.04,289.50 192.04,277.30" fill="#00ccff"/>
<path d="M129.80,276.70 L129.80,289.50 L133.10,292.80 L142.06,292.80 L145.36,289.50 L148.66,292.80 L157.62,292.80 L160.92,289.50 L164.22,292.80 L173.18,292.80 L176.48,289.50 L179.78,292.80 L188.74,292.80 L192.04,289.50 L192.04,276.70" fill="none" stroke="#2a3440" stroke-width="1.1"/>
<line x1="145.36" y1="276.70" x2="145.36" y2="289.50" stroke="#2a3440" stroke-width="1.1"/>
<line x1="160.92" y1="276.70" x2="160.92" y2="289.50" stroke="#2a3440" stroke-width="1.1"/>
<line x1="176.48" y1="276.70" x2="176.48" y2="289.50" stroke="#2a3440" stroke-width="1.1"/>
<text x="137.58" y="287.65" font-size="8.2" text-anchor="middle" fill="#10203a" stroke="#10203a" stroke-width="0.4">5</text>
<text x="153.14" y="287.65" font-size="8.2" text-anchor="middle" fill="#10203a" stroke="#10203a" stroke-width="0.4">6</text>
<text x="168.70" y="287.65" font-size="8.2" text-anchor="middle" fill="#10203a" stroke="#10203a" stroke-width="0.4">7</text>
<text x="184.26" y="287.65" font-size="8.2" text-anchor="middle" fill="#10203a" stroke="#10203a" stroke-width="0.4">8</text>
<circle cx="199.82" cy="285.05" r="2.0" fill="#2c2c78"/>
<circle cx="215.38" cy="285.05" r="2.0" fill="#2c2c78"/>
<circle cx="230.94" cy="285.05" r="2.0" fill="#2c2c78"/>
<circle cx="246.50" cy="285.05" r="2.0" fill="#2c2c78"/>
<circle cx="262.06" cy="285.05" r="2.0" fill="#2c2c78"/>
<circle cx="277.62" cy="285.05" r="2.0" fill="#2c2c78"/>
<circle cx="293.18" cy="285.05" r="2.0" fill="#2c2c78"/>
<polygon points="300.96,277.30 300.96,289.50 304.26,292.80 313.22,292.80 316.52,289.50 316.52,289.50 319.82,292.80 328.78,292.80 332.08,289.50 332.08,289.50 335.38,292.80 344.34,292.80 347.64,289.50 347.64,277.30" fill="#00ccff"/>
<path d="M300.96,276.70 L300.96,289.50 L304.26,292.80 L313.22,292.80 L316.52,289.50 L319.82,292.80 L328.78,292.80 L332.08,289.50 L335.38,292.80 L344.34,292.80 L347.64,289.50 L347.64,276.70" fill="none" stroke="#2a3440" stroke-width="1.1"/>
<line x1="316.52" y1="276.70" x2="316.52" y2="289.50" stroke="#2a3440" stroke-width="1.1"/>
<line x1="332.08" y1="276.70" x2="332.08" y2="289.50" stroke="#2a3440" stroke-width="1.1"/>
<text x="308.74" y="287.65" font-size="8.2" text-anchor="middle" fill="#10203a" stroke="#10203a" stroke-width="0.4">16</text>
<text x="324.30" y="287.65" font-size="8.2" text-anchor="middle" fill="#10203a" stroke="#10203a" stroke-width="0.4">17</text>
<text x="339.86" y="287.65" font-size="8.2" text-anchor="middle" fill="#10203a" stroke="#10203a" stroke-width="0.4">18</text>
<circle cx="355.42" cy="285.05" r="2.0" fill="#ee1010"/>
<circle cx="370.98" cy="285.05" r="2.0" fill="#ee1010"/>
<polygon points="378.76,277.30 378.76,289.50 382.06,292.80 391.02,292.80 394.32,289.50 394.32,289.50 397.62,292.80 406.58,292.80 409.88,289.50 409.88,289.50 413.18,292.80 422.14,292.80 425.44,289.50 425.44,289.50 428.74,292.80 437.70,292.80 441.00,289.50 441.00,289.50 444.30,292.80 453.26,292.80 456.56,289.50 456.56,277.30" fill="#00ccff"/>
<path d="M378.76,276.70 L378.76,289.50 L382.06,292.80 L391.02,292.80 L394.32,289.50 L397.62,292.80 L406.58,292.80 L409.88,289.50 L413.18,292.80 L422.14,292.80 L425.44,289.50 L428.74,292.80 L437.70,292.80 L441.00,289.50 L444.30,292.80 L453.26,292.80 L456.56,289.50 L456.56,276.70" fill="none" stroke="#2a3440" stroke-width="1.1"/>
<line x1="394.32" y1="276.70" x2="394.32" y2="289.50" stroke="#2a3440" stroke-width="1.1"/>
<line x1="409.88" y1="276.70" x2="409.88" y2="289.50" stroke="#2a3440" stroke-width="1.1"/>
<line x1="425.44" y1="276.70" x2="425.44" y2="289.50" stroke="#2a3440" stroke-width="1.1"/>
<line x1="441.00" y1="276.70" x2="441.00" y2="289.50" stroke="#2a3440" stroke-width="1.1"/>
<text x="386.54" y="287.65" font-size="8.2" text-anchor="middle" fill="#10203a" stroke="#10203a" stroke-width="0.4">21</text>
<text x="402.10" y="287.65" font-size="8.2" text-anchor="middle" fill="#10203a" stroke="#10203a" stroke-width="0.4">22</text>
<text x="417.66" y="287.65" font-size="8.2" text-anchor="middle" fill="#10203a" stroke="#10203a" stroke-width="0.4">23</text>
<text x="433.22" y="287.65" font-size="8.2" text-anchor="middle" fill="#10203a" stroke="#10203a" stroke-width="0.4">24</text>
<text x="448.78" y="287.65" font-size="8.2" text-anchor="middle" fill="#10203a" stroke="#10203a" stroke-width="0.4">25</text>
<polygon points="468.60,277.30 468.60,289.50 471.90,292.80 480.86,292.80 484.16,289.50 484.16,289.50 487.46,292.80 496.42,292.80 499.72,289.50 499.72,289.50 503.02,292.80 511.98,292.80 515.28,289.50 515.28,289.50 518.58,292.80 527.54,292.80 530.84,289.50 530.84,277.30" fill="#00ccff"/>
<path d="M468.60,276.70 L468.60,289.50 L471.90,292.80 L480.86,292.80 L484.16,289.50 L487.46,292.80 L496.42,292.80 L499.72,289.50 L503.02,292.80 L511.98,292.80 L515.28,289.50 L518.58,292.80 L527.54,292.80 L530.84,289.50 L530.84,276.70" fill="none" stroke="#2a3440" stroke-width="1.1"/>
<line x1="484.16" y1="276.70" x2="484.16" y2="289.50" stroke="#2a3440" stroke-width="1.1"/>
<line x1="499.72" y1="276.70" x2="499.72" y2="289.50" stroke="#2a3440" stroke-width="1.1"/>
<line x1="515.28" y1="276.70" x2="515.28" y2="289.50" stroke="#2a3440" stroke-width="1.1"/>
<text x="476.38" y="287.65" font-size="8.2" text-anchor="middle" fill="#10203a" stroke="#10203a" stroke-width="0.4">26</text>
<text x="491.94" y="287.65" font-size="8.2" text-anchor="middle" fill="#10203a" stroke="#10203a" stroke-width="0.4">27</text>
<text x="507.50" y="287.65" font-size="8.2" text-anchor="middle" fill="#10203a" stroke="#10203a" stroke-width="0.4">28</text>
<text x="523.06" y="287.65" font-size="8.2" text-anchor="middle" fill="#10203a" stroke="#10203a" stroke-width="0.4">29</text>
<polygon points="56.20,300.60 56.20,312.80 59.50,316.10 68.46,316.10 71.76,312.80 71.76,312.80 75.06,316.10 84.02,316.10 87.32,312.80 87.32,312.80 90.62,316.10 99.58,316.10 102.88,312.80 102.88,312.80 106.18,316.10 115.14,316.10 118.44,312.80 118.44,300.60" fill="#00ccff"/>
<path d="M56.20,300.00 L56.20,312.80 L59.50,316.10 L68.46,316.10 L71.76,312.80 L75.06,316.10 L84.02,316.10 L87.32,312.80 L90.62,316.10 L99.58,316.10 L102.88,312.80 L106.18,316.10 L115.14,316.10 L118.44,312.80 L118.44,300.00" fill="none" stroke="#2a3440" stroke-width="1.1"/>
<line x1="71.76" y1="300.00" x2="71.76" y2="312.80" stroke="#2a3440" stroke-width="1.1"/>
<line x1="87.32" y1="300.00" x2="87.32" y2="312.80" stroke="#2a3440" stroke-width="1.1"/>
<line x1="102.88" y1="300.00" x2="102.88" y2="312.80" stroke="#2a3440" stroke-width="1.1"/>
<text x="63.98" y="310.95" font-size="8.2" text-anchor="middle" fill="#10203a" stroke="#10203a" stroke-width="0.4">1</text>
<text x="79.54" y="310.95" font-size="8.2" text-anchor="middle" fill="#10203a" stroke="#10203a" stroke-width="0.4">2</text>
<text x="95.10" y="310.95" font-size="8.2" text-anchor="middle" fill="#10203a" stroke="#10203a" stroke-width="0.4">3</text>
<text x="110.66" y="310.95" font-size="8.2" text-anchor="middle" fill="#10203a" stroke="#10203a" stroke-width="0.4">4</text>
<polygon points="129.80,300.60 129.80,312.80 133.10,316.10 142.06,316.10 145.36,312.80 145.36,312.80 148.66,316.10 157.62,316.10 160.92,312.80 160.92,300.60" fill="#00ccff"/>
<path d="M129.80,300.00 L129.80,312.80 L133.10,316.10 L142.06,316.10 L145.36,312.80 L148.66,316.10 L157.62,316.10 L160.92,312.80 L160.92,300.00" fill="none" stroke="#2a3440" stroke-width="1.1"/>
<line x1="145.36" y1="300.00" x2="145.36" y2="312.80" stroke="#2a3440" stroke-width="1.1"/>
<text x="137.58" y="310.95" font-size="8.2" text-anchor="middle" fill="#10203a" stroke="#10203a" stroke-width="0.4">5</text>
<text x="153.14" y="310.95" font-size="8.2" text-anchor="middle" fill="#10203a" stroke="#10203a" stroke-width="0.4">6</text>
<circle cx="168.70" cy="308.35" r="2.0" fill="#2c2c78"/>
<circle cx="184.26" cy="308.35" r="2.0" fill="#2c2c78"/>
<circle cx="199.82" cy="308.35" r="2.0" fill="#2c2c78"/>
<circle cx="215.38" cy="308.35" r="2.0" fill="#2c2c78"/>
<circle cx="230.94" cy="308.35" r="2.0" fill="#2c2c78"/>
<circle cx="246.50" cy="308.35" r="2.0" fill="#2c2c78"/>
<circle cx="262.06" cy="308.35" r="2.0" fill="#2c2c78"/>
<circle cx="277.62" cy="308.35" r="2.0" fill="#2c2c78"/>
<circle cx="293.18" cy="308.35" r="2.0" fill="#2c2c78"/>
<circle cx="308.74" cy="308.35" r="2.0" fill="#2c2c78"/>
<circle cx="324.30" cy="308.35" r="2.0" fill="#2c2c78"/>
<circle cx="339.86" cy="308.35" r="2.0" fill="#2c2c78"/>
<polygon points="347.64,300.60 347.64,312.80 350.94,316.10 359.90,316.10 363.20,312.80 363.20,312.80 366.50,316.10 375.46,316.10 378.76,312.80 378.76,300.60" fill="#c4c4c4"/>
<path d="M347.64,300.00 L347.64,312.80 L350.94,316.10 L359.90,316.10 L363.20,312.80 L366.50,316.10 L375.46,316.10 L378.76,312.80 L378.76,300.00" fill="none" stroke="#2a3440" stroke-width="1.1"/>
<line x1="363.20" y1="300.00" x2="363.20" y2="312.80" stroke="#2a3440" stroke-width="1.1"/>
<text x="355.42" y="310.95" font-size="8.2" text-anchor="middle" fill="#9a9a9a" stroke="#9a9a9a" stroke-width="0.4">19</text>
<text x="370.98" y="310.95" font-size="8.2" text-anchor="middle" fill="#9a9a9a" stroke="#9a9a9a" stroke-width="0.4">20</text>
<circle cx="386.54" cy="308.35" r="2.0" fill="#2c2c78"/>
<circle cx="402.10" cy="308.35" r="2.0" fill="#2c2c78"/>
<polygon points="409.88,300.60 409.88,312.80 413.18,316.10 422.14,316.10 425.44,312.80 425.44,312.80 428.74,316.10 437.70,316.10 441.00,312.80 441.00,312.80 444.30,316.10 453.26,316.10 456.56,312.80 456.56,300.60" fill="#00ccff"/>
<path d="M409.88,300.00 L409.88,312.80 L413.18,316.10 L422.14,316.10 L425.44,312.80 L428.74,316.10 L437.70,316.10 L441.00,312.80 L444.30,316.10 L453.26,316.10 L456.56,312.80 L456.56,300.00" fill="none" stroke="#2a3440" stroke-width="1.1"/>
<line x1="425.44" y1="300.00" x2="425.44" y2="312.80" stroke="#2a3440" stroke-width="1.1"/>
<line x1="441.00" y1="300.00" x2="441.00" y2="312.80" stroke="#2a3440" stroke-width="1.1"/>
<text x="417.66" y="310.95" font-size="8.2" text-anchor="middle" fill="#10203a" stroke="#10203a" stroke-width="0.4">23</text>
<text x="433.22" y="310.95" font-size="8.2" text-anchor="middle" fill="#10203a" stroke="#10203a" stroke-width="0.4">24</text>
<text x="448.78" y="310.95" font-size="8.2" text-anchor="middle" fill="#10203a" stroke="#10203a" stroke-width="0.4">25</text>
<polygon points="468.60,300.60 468.60,312.80 471.90,316.10 480.86,316.10 484.16,312.80 484.16,312.80 487.46,316.10 496.42,316.10 499.72,312.80 499.72,312.80 503.02,316.10 511.98,316.10 515.28,312.80 515.28,312.80 518.58,316.10 527.54,316.10 530.84,312.80 530.84,300.60" fill="#00ccff"/>
<path d="M468.60,300.00 L468.60,312.80 L471.90,316.10 L480.86,316.10 L484.16,312.80 L487.46,316.10 L496.42,316.10 L499.72,312.80 L503.02,316.10 L511.98,316.10 L515.28,312.80 L518.58,316.10 L527.54,316.10 L530.84,312.80 L530.84,300.00" fill="none" stroke="#2a3440" stroke-width="1.1"/>
<line x1="484.16" y1="300.00" x2="484.16" y2="312.80" stroke="#2a3440" stroke-width="1.1"/>
<line x1="499.72" y1="300.00" x2="499.72" y2="312.80" stroke="#2a3440" stroke-width="1.1"/>
<line x1="515.28" y1="300.00" x2="515.28" y2="312.80" stroke="#2a3440" stroke-width="1.1"/>
<text x="476.38" y="310.95" font-size="8.2" text-anchor="middle" fill="#10203a" stroke="#10203a" stroke-width="0.4">26</text>
<text x="491.94" y="310.95" font-size="8.2" text-anchor="middle" fill="#10203a" stroke="#10203a" stroke-width="0.4">27</text>
<text x="507.50" y="310.95" font-size="8.2" text-anchor="middle" fill="#10203a" stroke="#10203a" stroke-width="0.4">28</text>
<text x="523.06" y="310.95" font-size="8.2" text-anchor="middle" fill="#10203a" stroke="#10203a" stroke-width="0.4">29</text>
<polygon points="56.20,323.90 56.20,336.10 59.50,339.40 68.46,339.40 71.76,336.10 71.76,336.10 75.06,339.40 84.02,339.40 87.32,336.10 87.32,336.10 90.62,339.40 99.58,339.40 102.88,336.10 102.88,336.10 106.18,339.40 115.14,339.40 118.44,336.10 118.44,323.90" fill="#00ccff"/>
<path d="M56.20,323.30 L56.20,336.10 L59.50,339.40 L68.46,339.40 L71.76,336.10 L75.06,339.40 L84.02,339.40 L87.32,336.10 L90.62,339.40 L99.58,339.40 L102.88,336.10 L106.18,339.40 L115.14,339.40 L118.44,336.10 L118.44,323.30" fill="none" stroke="#2a3440" stroke-width="1.1"/>
<line x1="71.76" y1="323.30" x2="71.76" y2="336.10" stroke="#2a3440" stroke-width="1.1"/>
<line x1="87.32" y1="323.30" x2="87.32" y2="336.10" stroke="#2a3440" stroke-width="1.1"/>
<line x1="102.88" y1="323.30" x2="102.88" y2="336.10" stroke="#2a3440" stroke-width="1.1"/>
<text x="63.98" y="334.25" font-size="8.2" text-anchor="middle" fill="#10203a" stroke="#10203a" stroke-width="0.4">1</text>
<text x="79.54" y="334.25" font-size="8.2" text-anchor="middle" fill="#10203a" stroke="#10203a" stroke-width="0.4">2</text>
<text x="95.10" y="334.25" font-size="8.2" text-anchor="middle" fill="#10203a" stroke="#10203a" stroke-width="0.4">3</text>
<text x="110.66" y="334.25" font-size="8.2" text-anchor="middle" fill="#10203a" stroke="#10203a" stroke-width="0.4">4</text>
<polygon points="129.80,323.90 129.80,336.10 133.10,339.40 142.06,339.40 145.36,336.10 145.36,336.10 148.66,339.40 157.62,339.40 160.92,336.10 160.92,323.90" fill="#00ccff"/>
<path d="M129.80,323.30 L129.80,336.10 L133.10,339.40 L142.06,339.40 L145.36,336.10 L148.66,339.40 L157.62,339.40 L160.92,336.10 L160.92,323.30" fill="none" stroke="#2a3440" stroke-width="1.1"/>
<line x1="145.36" y1="323.30" x2="145.36" y2="336.10" stroke="#2a3440" stroke-width="1.1"/>
<text x="137.58" y="334.25" font-size="8.2" text-anchor="middle" fill="#10203a" stroke="#10203a" stroke-width="0.4">5</text>
<text x="153.14" y="334.25" font-size="8.2" text-anchor="middle" fill="#10203a" stroke="#10203a" stroke-width="0.4">6</text>
<circle cx="168.70" cy="331.65" r="2.0" fill="#2c2c78"/>
<circle cx="184.26" cy="331.65" r="2.0" fill="#2c2c78"/>
<circle cx="199.82" cy="331.65" r="2.0" fill="#2c2c78"/>
<circle cx="215.38" cy="331.65" r="2.0" fill="#2c2c78"/>
<circle cx="230.94" cy="331.65" r="2.0" fill="#2c2c78"/>
<circle cx="246.50" cy="331.65" r="2.0" fill="#2c2c78"/>
<circle cx="262.06" cy="331.65" r="2.0" fill="#2c2c78"/>
<circle cx="277.62" cy="331.65" r="2.0" fill="#2c2c78"/>
<circle cx="293.18" cy="331.65" r="2.0" fill="#2c2c78"/>
<circle cx="308.74" cy="331.65" r="2.0" fill="#2c2c78"/>
<circle cx="324.30" cy="331.65" r="2.0" fill="#2c2c78"/>
<circle cx="339.86" cy="331.65" r="2.0" fill="#2c2c78"/>
<circle cx="355.42" cy="331.65" r="2.0" fill="#2c2c78"/>
<circle cx="370.98" cy="331.65" r="2.0" fill="#2c2c78"/>
<circle cx="386.54" cy="331.65" r="2.0" fill="#2c2c78"/>
<circle cx="402.10" cy="331.65" r="2.0" fill="#2c2c78"/>
<polygon points="409.88,323.90 409.88,336.10 413.18,339.40 422.14,339.40 425.44,336.10 425.44,336.10 428.74,339.40 437.70,339.40 441.00,336.10 441.00,336.10 444.30,339.40 453.26,339.40 456.56,336.10 456.56,323.90" fill="#00ccff"/>
<path d="M409.88,323.30 L409.88,336.10 L413.18,339.40 L422.14,339.40 L425.44,336.10 L428.74,339.40 L437.70,339.40 L441.00,336.10 L444.30,339.40 L453.26,339.40 L456.56,336.10 L456.56,323.30" fill="none" stroke="#2a3440" stroke-width="1.1"/>
<line x1="425.44" y1="323.30" x2="425.44" y2="336.10" stroke="#2a3440" stroke-width="1.1"/>
<line x1="441.00" y1="323.30" x2="441.00" y2="336.10" stroke="#2a3440" stroke-width="1.1"/>
<text x="417.66" y="334.25" font-size="8.2" text-anchor="middle" fill="#10203a" stroke="#10203a" stroke-width="0.4">23</text>
<text x="433.22" y="334.25" font-size="8.2" text-anchor="middle" fill="#10203a" stroke="#10203a" stroke-width="0.4">24</text>
<text x="448.78" y="334.25" font-size="8.2" text-anchor="middle" fill="#10203a" stroke="#10203a" stroke-width="0.4">25</text>
<polygon points="468.60,323.90 468.60,336.10 471.90,339.40 480.86,339.40 484.16,336.10 484.16,336.10 487.46,339.40 496.42,339.40 499.72,336.10 499.72,336.10 503.02,339.40 511.98,339.40 515.28,336.10 515.28,336.10 518.58,339.40 527.54,339.40 530.84,336.10 530.84,323.90" fill="#b8f8c8"/>
<path d="M468.60,323.30 L468.60,336.10 L471.90,339.40 L480.86,339.40 L484.16,336.10 L487.46,339.40 L496.42,339.40 L499.72,336.10 L503.02,339.40 L511.98,339.40 L515.28,336.10 L518.58,339.40 L527.54,339.40 L530.84,336.10 L530.84,323.30" fill="none" stroke="#2a3440" stroke-width="1.1"/>
<line x1="499.72" y1="323.30" x2="499.72" y2="336.10" stroke="#2a3440" stroke-width="1.1"/>
<text x="476.38" y="334.25" font-size="8.2" text-anchor="middle" fill="#10203a" stroke="#10203a" stroke-width="0.4">26</text>
<text x="491.94" y="334.25" font-size="8.2" text-anchor="middle" fill="#10203a" stroke="#10203a" stroke-width="0.4">27</text>
<text x="507.50" y="334.25" font-size="8.2" text-anchor="middle" fill="#10203a" stroke="#10203a" stroke-width="0.4">28</text>
<text x="523.06" y="334.25" font-size="8.2" text-anchor="middle" fill="#10203a" stroke="#10203a" stroke-width="0.4">29</text>
<polygon points="83.40,353.00 83.40,365.20 86.70,368.50 95.66,368.50 98.96,365.20 98.96,365.20 102.26,368.50 111.22,368.50 114.52,365.20 114.52,353.00" fill="#00ccff"/>
<path d="M83.40,352.40 L83.40,365.20 L86.70,368.50 L95.66,368.50 L98.96,365.20 L102.26,368.50 L111.22,368.50 L114.52,365.20 L114.52,352.40" fill="none" stroke="#2a3440" stroke-width="1.1"/>
<line x1="98.96" y1="352.40" x2="98.96" y2="365.20" stroke="#2a3440" stroke-width="1.1"/>
<text x="91.18" y="363.35" font-size="8.2" text-anchor="middle" fill="#10203a" stroke="#10203a" stroke-width="0.4">1</text>
<text x="106.74" y="363.35" font-size="8.2" text-anchor="middle" fill="#10203a" stroke="#10203a" stroke-width="0.4">2</text>
<circle cx="122.30" cy="360.75" r="2.0" fill="#2c2c78"/>
<circle cx="137.86" cy="360.75" r="2.0" fill="#2c2c78"/>
<circle cx="153.42" cy="360.75" r="2.0" fill="#2c2c78"/>
<circle cx="168.98" cy="360.75" r="2.0" fill="#2c2c78"/>
<circle cx="184.54" cy="360.75" r="2.0" fill="#2c2c78"/>
<circle cx="200.10" cy="360.75" r="2.0" fill="#2c2c78"/>
<circle cx="215.66" cy="360.75" r="2.0" fill="#2c2c78"/>
<circle cx="231.22" cy="360.75" r="2.0" fill="#2c2c78"/>
<circle cx="246.78" cy="360.75" r="2.0" fill="#2c2c78"/>
<circle cx="262.34" cy="360.75" r="2.0" fill="#2c2c78"/>
<circle cx="277.90" cy="360.75" r="2.0" fill="#2c2c78"/>
<circle cx="293.46" cy="360.75" r="2.0" fill="#2c2c78"/>
<circle cx="309.02" cy="360.75" r="2.0" fill="#2c2c78"/>
<circle cx="324.58" cy="360.75" r="2.0" fill="#2c2c78"/>
<circle cx="340.14" cy="360.75" r="2.0" fill="#2c2c78"/>
<circle cx="355.70" cy="360.75" r="2.0" fill="#2c2c78"/>
<circle cx="371.26" cy="360.75" r="2.0" fill="#2c2c78"/>
<circle cx="386.82" cy="360.75" r="2.0" fill="#2c2c78"/>
<circle cx="402.38" cy="360.75" r="2.0" fill="#2c2c78"/>
<circle cx="417.94" cy="360.75" r="2.0" fill="#2c2c78"/>
<circle cx="433.50" cy="360.75" r="2.0" fill="#2c2c78"/>
<polygon points="441.28,353.00 441.28,365.20 444.58,368.50 453.54,368.50 456.84,365.20 456.84,353.00" fill="#00ccff"/>
<path d="M441.28,352.40 L441.28,365.20 L444.58,368.50 L453.54,368.50 L456.84,365.20 L456.84,352.40" fill="none" stroke="#2a3440" stroke-width="1.1"/>
<text x="449.06" y="363.35" font-size="8.2" text-anchor="middle" fill="#10203a" stroke="#10203a" stroke-width="0.4">24</text>
<polygon points="468.60,353.00 468.60,365.20 471.90,368.50 480.86,368.50 484.16,365.20 484.16,365.20 487.46,368.50 496.42,368.50 499.72,365.20 499.72,365.20 503.02,368.50 511.98,368.50 515.28,365.20 515.28,353.00" fill="#ffffff"/>
<path d="M468.60,352.40 L468.60,365.20 L471.90,368.50 L480.86,368.50 L484.16,365.20 L487.46,368.50 L496.42,368.50 L499.72,365.20 L503.02,368.50 L511.98,368.50 L515.28,365.20 L515.28,352.40" fill="none" stroke="#2a3440" stroke-width="1.1"/>
<line x1="484.16" y1="352.40" x2="484.16" y2="365.20" stroke="#2a3440" stroke-width="1.1"/>
<line x1="499.72" y1="352.40" x2="499.72" y2="365.20" stroke="#2a3440" stroke-width="1.1"/>
<text x="476.38" y="363.35" font-size="7.5" text-anchor="middle" fill="#10203a" stroke="#10203a" stroke-width="0.4">R1</text>
<text x="491.94" y="363.35" font-size="7.5" text-anchor="middle" fill="#10203a" stroke="#10203a" stroke-width="0.4">R2</text>
<text x="507.50" y="363.35" font-size="7.5" text-anchor="middle" fill="#10203a" stroke="#10203a" stroke-width="0.4">R3</text>
<polygon points="83.40,376.30 83.40,388.50 86.70,391.80 95.66,391.80 98.96,388.50 98.96,388.50 102.26,391.80 111.22,391.80 114.52,388.50 114.52,376.30" fill="#00ccff"/>
<path d="M83.40,375.70 L83.40,388.50 L86.70,391.80 L95.66,391.80 L98.96,388.50 L102.26,391.80 L111.22,391.80 L114.52,388.50 L114.52,375.70" fill="none" stroke="#2a3440" stroke-width="1.1"/>
<line x1="98.96" y1="375.70" x2="98.96" y2="388.50" stroke="#2a3440" stroke-width="1.1"/>
<text x="91.18" y="386.65" font-size="8.2" text-anchor="middle" fill="#10203a" stroke="#10203a" stroke-width="0.4">1</text>
<text x="106.74" y="386.65" font-size="8.2" text-anchor="middle" fill="#10203a" stroke="#10203a" stroke-width="0.4">2</text>
<polygon points="114.52,376.30 114.52,388.50 117.82,391.80 126.78,391.80 130.08,388.50 130.08,388.50 133.38,391.80 142.34,391.80 145.64,388.50 145.64,376.30" fill="#b8f8c8"/>
<path d="M114.52,375.70 L114.52,388.50 L117.82,391.80 L126.78,391.80 L130.08,388.50 L133.38,391.80 L142.34,391.80 L145.64,388.50 L145.64,375.70" fill="none" stroke="#2a3440" stroke-width="1.1"/>
<text x="122.30" y="386.65" font-size="8.2" text-anchor="middle" fill="#10203a" stroke="#10203a" stroke-width="0.4">3</text>
<text x="137.86" y="386.65" font-size="8.2" text-anchor="middle" fill="#10203a" stroke="#10203a" stroke-width="0.4">4</text>
<polygon points="145.64,376.30 145.64,388.50 148.94,391.80 157.90,391.80 161.20,388.50 161.20,388.50 164.50,391.80 173.46,391.80 176.76,388.50 176.76,388.50 180.06,391.80 189.02,391.80 192.32,388.50 192.32,388.50 195.62,391.80 204.58,391.80 207.88,388.50 207.88,388.50 211.18,391.80 220.14,391.80 223.44,388.50 223.44,388.50 226.74,391.80 235.70,391.80 239.00,388.50 239.00,388.50 242.30,391.80 251.26,391.80 254.56,388.50 254.56,388.50 257.86,391.80 266.82,391.80 270.12,388.50 270.12,376.30" fill="#00ccff"/>
<path d="M145.64,375.70 L145.64,388.50 L148.94,391.80 L157.90,391.80 L161.20,388.50 L164.50,391.80 L173.46,391.80 L176.76,388.50 L180.06,391.80 L189.02,391.80 L192.32,388.50 L195.62,391.80 L204.58,391.80 L207.88,388.50 L211.18,391.80 L220.14,391.80 L223.44,388.50 L226.74,391.80 L235.70,391.80 L239.00,388.50 L242.30,391.80 L251.26,391.80 L254.56,388.50 L257.86,391.80 L266.82,391.80 L270.12,388.50 L270.12,375.70" fill="none" stroke="#2a3440" stroke-width="1.1"/>
<line x1="161.20" y1="375.70" x2="161.20" y2="388.50" stroke="#2a3440" stroke-width="1.1"/>
<line x1="176.76" y1="375.70" x2="176.76" y2="388.50" stroke="#2a3440" stroke-width="1.1"/>
<line x1="192.32" y1="375.70" x2="192.32" y2="388.50" stroke="#2a3440" stroke-width="1.1"/>
<line x1="207.88" y1="375.70" x2="207.88" y2="388.50" stroke="#2a3440" stroke-width="1.1"/>
<line x1="223.44" y1="375.70" x2="223.44" y2="388.50" stroke="#2a3440" stroke-width="1.1"/>
<line x1="239.00" y1="375.70" x2="239.00" y2="388.50" stroke="#2a3440" stroke-width="1.1"/>
<line x1="254.56" y1="375.70" x2="254.56" y2="388.50" stroke="#2a3440" stroke-width="1.1"/>
<text x="153.42" y="386.65" font-size="8.2" text-anchor="middle" fill="#10203a" stroke="#10203a" stroke-width="0.4">5</text>
<path d="M161.80,376.30 L168.20,376.30 L161.80,382.80 Z" fill="#ff6010"/>
<circle cx="168.98" cy="384.25" r="6.3" fill="#f4ee00"/>
<text x="168.98" y="386.65" font-size="8.2" text-anchor="middle" fill="#10203a" stroke="#10203a" stroke-width="0.4">6</text>
<path d="M177.36,376.30 L183.76,376.30 L177.36,382.80 Z" fill="#ff6010"/>
<circle cx="184.54" cy="384.25" r="6.3" fill="#f4ee00"/>
<text x="184.54" y="386.65" font-size="8.2" text-anchor="middle" fill="#10203a" stroke="#10203a" stroke-width="0.4">7</text>
<circle cx="200.10" cy="384.25" r="6.3" fill="#f4ee00"/>
<text x="200.10" y="386.65" font-size="8.2" text-anchor="middle" fill="#10203a" stroke="#10203a" stroke-width="0.4">8</text>
<circle cx="215.66" cy="384.25" r="6.3" fill="#f4ee00"/>
<text x="215.66" y="386.65" font-size="8.2" text-anchor="middle" fill="#10203a" stroke="#10203a" stroke-width="0.4">9</text>
<text x="231.22" y="386.65" font-size="8.2" text-anchor="middle" fill="#10203a" stroke="#10203a" stroke-width="0.4">10</text>
<text x="246.78" y="386.65" font-size="8.2" text-anchor="middle" fill="#10203a" stroke="#10203a" stroke-width="0.4">11</text>
<text x="262.34" y="386.65" font-size="8.2" text-anchor="middle" fill="#10203a" stroke="#10203a" stroke-width="0.4">12</text>
<circle cx="277.90" cy="384.05" r="2.0" fill="#2c2c78"/>
<circle cx="293.46" cy="384.05" r="2.0" fill="#2c2c78"/>
<circle cx="309.02" cy="384.05" r="2.0" fill="#2c2c78"/>
<polygon points="316.80,376.30 316.80,388.50 320.10,391.80 329.06,391.80 332.36,388.50 332.36,376.30" fill="#00ccff"/>
<path d="M316.80,375.70 L316.80,388.50 L320.10,391.80 L329.06,391.80 L332.36,388.50 L332.36,375.70" fill="none" stroke="#2a3440" stroke-width="1.1"/>
<text x="324.58" y="386.65" font-size="8.2" text-anchor="middle" fill="#10203a" stroke="#10203a" stroke-width="0.4">16</text>
<polygon points="332.36,376.30 332.36,388.50 335.66,391.80 344.62,391.80 347.92,388.50 347.92,388.50 351.22,391.80 360.18,391.80 363.48,388.50 363.48,376.30" fill="#b8f8c8"/>
<path d="M332.36,375.70 L332.36,388.50 L335.66,391.80 L344.62,391.80 L347.92,388.50 L351.22,391.80 L360.18,391.80 L363.48,388.50 L363.48,375.70" fill="none" stroke="#2a3440" stroke-width="1.1"/>
<text x="340.14" y="386.65" font-size="8.2" text-anchor="middle" fill="#10203a" stroke="#10203a" stroke-width="0.4">17</text>
<text x="355.70" y="386.65" font-size="8.2" text-anchor="middle" fill="#10203a" stroke="#10203a" stroke-width="0.4">18</text>
<polygon points="363.48,376.30 363.48,388.50 366.78,391.80 375.74,391.80 379.04,388.50 379.04,388.50 382.34,391.80 391.30,391.80 394.60,388.50 394.60,388.50 397.90,391.80 406.86,391.80 410.16,388.50 410.16,388.50 413.46,391.80 422.42,391.80 425.72,388.50 425.72,388.50 429.02,391.80 437.98,391.80 441.28,388.50 441.28,388.50 444.58,391.80 453.54,391.80 456.84,388.50 456.84,376.30" fill="#00ccff"/>
<path d="M363.48,375.70 L363.48,388.50 L366.78,391.80 L375.74,391.80 L379.04,388.50 L382.34,391.80 L391.30,391.80 L394.60,388.50 L397.90,391.80 L406.86,391.80 L410.16,388.50 L413.46,391.80 L422.42,391.80 L425.72,388.50 L429.02,391.80 L437.98,391.80 L441.28,388.50 L444.58,391.80 L453.54,391.80 L456.84,388.50 L456.84,375.70" fill="none" stroke="#2a3440" stroke-width="1.1"/>
<line x1="379.04" y1="375.70" x2="379.04" y2="388.50" stroke="#2a3440" stroke-width="1.1"/>
<line x1="394.60" y1="375.70" x2="394.60" y2="388.50" stroke="#2a3440" stroke-width="1.1"/>
<line x1="410.16" y1="375.70" x2="410.16" y2="388.50" stroke="#2a3440" stroke-width="1.1"/>
<line x1="425.72" y1="375.70" x2="425.72" y2="388.50" stroke="#2a3440" stroke-width="1.1"/>
<line x1="441.28" y1="375.70" x2="441.28" y2="388.50" stroke="#2a3440" stroke-width="1.1"/>
<text x="371.26" y="386.65" font-size="8.2" text-anchor="middle" fill="#10203a" stroke="#10203a" stroke-width="0.4">19</text>
<text x="386.82" y="386.65" font-size="8.2" text-anchor="middle" fill="#10203a" stroke="#10203a" stroke-width="0.4">20</text>
<text x="402.38" y="386.65" font-size="8.2" text-anchor="middle" fill="#10203a" stroke="#10203a" stroke-width="0.4">21</text>
<text x="417.94" y="386.65" font-size="8.2" text-anchor="middle" fill="#10203a" stroke="#10203a" stroke-width="0.4">22</text>
<text x="433.50" y="386.65" font-size="8.2" text-anchor="middle" fill="#10203a" stroke="#10203a" stroke-width="0.4">23</text>
<text x="449.06" y="386.65" font-size="8.2" text-anchor="middle" fill="#10203a" stroke="#10203a" stroke-width="0.4">24</text>
<polygon points="468.60,376.30 468.60,388.50 471.90,391.80 480.86,391.80 484.16,388.50 484.16,388.50 487.46,391.80 496.42,391.80 499.72,388.50 499.72,388.50 503.02,391.80 511.98,391.80 515.28,388.50 515.28,388.50 518.58,391.80 527.54,391.80 530.84,388.50 530.84,376.30" fill="#b8f8c8"/>
<path d="M468.60,375.70 L468.60,388.50 L471.90,391.80 L480.86,391.80 L484.16,388.50 L487.46,391.80 L496.42,391.80 L499.72,388.50 L503.02,391.80 L511.98,391.80 L515.28,388.50 L518.58,391.80 L527.54,391.80 L530.84,388.50 L530.84,375.70" fill="none" stroke="#2a3440" stroke-width="1.1"/>
<line x1="499.72" y1="375.70" x2="499.72" y2="388.50" stroke="#2a3440" stroke-width="1.1"/>
<text x="476.38" y="386.65" font-size="8.2" text-anchor="middle" fill="#10203a" stroke="#10203a" stroke-width="0.4">25</text>
<text x="491.94" y="386.65" font-size="8.2" text-anchor="middle" fill="#10203a" stroke="#10203a" stroke-width="0.4">26</text>
<text x="507.50" y="386.65" font-size="8.2" text-anchor="middle" fill="#10203a" stroke="#10203a" stroke-width="0.4">27</text>
<text x="523.06" y="386.65" font-size="8.2" text-anchor="middle" fill="#10203a" stroke="#10203a" stroke-width="0.4">28</text>
<polygon points="83.40,399.60 83.40,411.80 86.70,415.10 95.66,415.10 98.96,411.80 98.96,411.80 102.26,415.10 111.22,415.10 114.52,411.80 114.52,411.80 117.82,415.10 126.78,415.10 130.08,411.80 130.08,411.80 133.38,415.10 142.34,415.10 145.64,411.80 145.64,411.80 148.94,415.10 157.90,415.10 161.20,411.80 161.20,411.80 164.50,415.10 173.46,415.10 176.76,411.80 176.76,399.60" fill="#00ccff"/>
<path d="M83.40,399.00 L83.40,411.80 L86.70,415.10 L95.66,415.10 L98.96,411.80 L102.26,415.10 L111.22,415.10 L114.52,411.80 L117.82,415.10 L126.78,415.10 L130.08,411.80 L133.38,415.10 L142.34,415.10 L145.64,411.80 L148.94,415.10 L157.90,415.10 L161.20,411.80 L164.50,415.10 L173.46,415.10 L176.76,411.80 L176.76,399.00" fill="none" stroke="#2a3440" stroke-width="1.1"/>
<line x1="98.96" y1="399.00" x2="98.96" y2="411.80" stroke="#2a3440" stroke-width="1.1"/>
<line x1="114.52" y1="399.00" x2="114.52" y2="411.80" stroke="#2a3440" stroke-width="1.1"/>
<line x1="130.08" y1="399.00" x2="130.08" y2="411.80" stroke="#2a3440" stroke-width="1.1"/>
<line x1="145.64" y1="399.00" x2="145.64" y2="411.80" stroke="#2a3440" stroke-width="1.1"/>
<line x1="161.20" y1="399.00" x2="161.20" y2="411.80" stroke="#2a3440" stroke-width="1.1"/>
<text x="91.18" y="409.95" font-size="8.2" text-anchor="middle" fill="#10203a" stroke="#10203a" stroke-width="0.4">1</text>
<text x="106.74" y="409.95" font-size="8.2" text-anchor="middle" fill="#10203a" stroke="#10203a" stroke-width="0.4">2</text>
<text x="122.30" y="409.95" font-size="8.2" text-anchor="middle" fill="#10203a" stroke="#10203a" stroke-width="0.4">3</text>
<text x="137.86" y="409.95" font-size="8.2" text-anchor="middle" fill="#10203a" stroke="#10203a" stroke-width="0.4">4</text>
<text x="153.42" y="409.95" font-size="8.2" text-anchor="middle" fill="#10203a" stroke="#10203a" stroke-width="0.4">5</text>
<text x="168.98" y="409.95" font-size="8.2" text-anchor="middle" fill="#10203a" stroke="#10203a" stroke-width="0.4">6</text>
<circle cx="184.54" cy="407.35" r="2.0" fill="#2c2c78"/>
<circle cx="200.10" cy="407.35" r="2.0" fill="#2c2c78"/>
<polygon points="207.88,399.60 207.88,411.80 211.18,415.10 220.14,415.10 223.44,411.80 223.44,411.80 226.74,415.10 235.70,415.10 239.00,411.80 239.00,411.80 242.30,415.10 251.26,415.10 254.56,411.80 254.56,411.80 257.86,415.10 266.82,415.10 270.12,411.80 270.12,411.80 273.42,415.10 282.38,415.10 285.68,411.80 285.68,411.80 288.98,415.10 297.94,415.10 301.24,411.80 301.24,411.80 304.54,415.10 313.50,415.10 316.80,411.80 316.80,411.80 320.10,415.10 329.06,415.10 332.36,411.80 332.36,411.80 335.66,415.10 344.62,415.10 347.92,411.80 347.92,411.80 351.22,415.10 360.18,415.10 363.48,411.80 363.48,411.80 366.78,415.10 375.74,415.10 379.04,411.80 379.04,411.80 382.34,415.10 391.30,415.10 394.60,411.80 394.60,411.80 397.90,415.10 406.86,415.10 410.16,411.80 410.16,411.80 413.46,415.10 422.42,415.10 425.72,411.80 425.72,399.60" fill="#00ccff"/>
<path d="M207.88,399.00 L207.88,411.80 L211.18,415.10 L220.14,415.10 L223.44,411.80 L226.74,415.10 L235.70,415.10 L239.00,411.80 L242.30,415.10 L251.26,415.10 L254.56,411.80 L257.86,415.10 L266.82,415.10 L270.12,411.80 L273.42,415.10 L282.38,415.10 L285.68,411.80 L288.98,415.10 L297.94,415.10 L301.24,411.80 L304.54,415.10 L313.50,415.10 L316.80,411.80 L320.10,415.10 L329.06,415.10 L332.36,411.80 L335.66,415.10 L344.62,415.10 L347.92,411.80 L351.22,415.10 L360.18,415.10 L363.48,411.80 L366.78,415.10 L375.74,415.10 L379.04,411.80 L382.34,415.10 L391.30,415.10 L394.60,411.80 L397.90,415.10 L406.86,415.10 L410.16,411.80 L413.46,415.10 L422.42,415.10 L425.72,411.80 L425.72,399.00" fill="none" stroke="#2a3440" stroke-width="1.1"/>
<line x1="223.44" y1="399.00" x2="223.44" y2="411.80" stroke="#2a3440" stroke-width="1.1"/>
<line x1="239.00" y1="399.00" x2="239.00" y2="411.80" stroke="#2a3440" stroke-width="1.1"/>
<line x1="254.56" y1="399.00" x2="254.56" y2="411.80" stroke="#2a3440" stroke-width="1.1"/>
<line x1="270.12" y1="399.00" x2="270.12" y2="411.80" stroke="#2a3440" stroke-width="1.1"/>
<line x1="285.68" y1="399.00" x2="285.68" y2="411.80" stroke="#2a3440" stroke-width="1.1"/>
<line x1="301.24" y1="399.00" x2="301.24" y2="411.80" stroke="#2a3440" stroke-width="1.1"/>
<line x1="316.80" y1="399.00" x2="316.80" y2="411.80" stroke="#2a3440" stroke-width="1.1"/>
<line x1="332.36" y1="399.00" x2="332.36" y2="411.80" stroke="#2a3440" stroke-width="1.1"/>
<line x1="347.92" y1="399.00" x2="347.92" y2="411.80" stroke="#2a3440" stroke-width="1.1"/>
<line x1="363.48" y1="399.00" x2="363.48" y2="411.80" stroke="#2a3440" stroke-width="1.1"/>
<line x1="379.04" y1="399.00" x2="379.04" y2="411.80" stroke="#2a3440" stroke-width="1.1"/>
<line x1="394.60" y1="399.00" x2="394.60" y2="411.80" stroke="#2a3440" stroke-width="1.1"/>
<line x1="410.16" y1="399.00" x2="410.16" y2="411.80" stroke="#2a3440" stroke-width="1.1"/>
<text x="215.66" y="409.95" font-size="8.2" text-anchor="middle" fill="#10203a" stroke="#10203a" stroke-width="0.4">9</text>
<text x="231.22" y="409.95" font-size="8.2" text-anchor="middle" fill="#10203a" stroke="#10203a" stroke-width="0.4">10</text>
<text x="246.78" y="409.95" font-size="8.2" text-anchor="middle" fill="#10203a" stroke="#10203a" stroke-width="0.4">11</text>
<text x="262.34" y="409.95" font-size="8.2" text-anchor="middle" fill="#10203a" stroke="#10203a" stroke-width="0.4">12</text>
<text x="277.90" y="409.95" font-size="8.2" text-anchor="middle" fill="#10203a" stroke="#10203a" stroke-width="0.4">13</text>
<text x="293.46" y="409.95" font-size="8.2" text-anchor="middle" fill="#10203a" stroke="#10203a" stroke-width="0.4">14</text>
<text x="309.02" y="409.95" font-size="8.2" text-anchor="middle" fill="#10203a" stroke="#10203a" stroke-width="0.4">15</text>
<text x="324.58" y="409.95" font-size="8.2" text-anchor="middle" fill="#10203a" stroke="#10203a" stroke-width="0.4">16</text>
<text x="340.14" y="409.95" font-size="8.2" text-anchor="middle" fill="#10203a" stroke="#10203a" stroke-width="0.4">17</text>
<text x="355.70" y="409.95" font-size="8.2" text-anchor="middle" fill="#10203a" stroke="#10203a" stroke-width="0.4">18</text>
<text x="371.26" y="409.95" font-size="8.2" text-anchor="middle" fill="#10203a" stroke="#10203a" stroke-width="0.4">19</text>
<text x="386.82" y="409.95" font-size="8.2" text-anchor="middle" fill="#10203a" stroke="#10203a" stroke-width="0.4">20</text>
<text x="402.38" y="409.95" font-size="8.2" text-anchor="middle" fill="#10203a" stroke="#10203a" stroke-width="0.4">21</text>
<text x="417.94" y="409.95" font-size="8.2" text-anchor="middle" fill="#10203a" stroke="#10203a" stroke-width="0.4">22</text>
<polygon points="425.72,399.60 425.72,411.80 429.02,415.10 437.98,415.10 441.28,411.80 441.28,411.80 444.58,415.10 453.54,415.10 456.84,411.80 456.84,399.60" fill="#b8f8c8"/>
<path d="M425.72,399.00 L425.72,411.80 L429.02,415.10 L437.98,415.10 L441.28,411.80 L444.58,415.10 L453.54,415.10 L456.84,411.80 L456.84,399.00" fill="none" stroke="#2a3440" stroke-width="1.1"/>
<text x="433.50" y="409.95" font-size="8.2" text-anchor="middle" fill="#10203a" stroke="#10203a" stroke-width="0.4">23</text>
<text x="449.06" y="409.95" font-size="8.2" text-anchor="middle" fill="#10203a" stroke="#10203a" stroke-width="0.4">24</text>
<polygon points="468.60,399.60 468.60,411.80 471.90,415.10 480.86,415.10 484.16,411.80 484.16,411.80 487.46,415.10 496.42,415.10 499.72,411.80 499.72,411.80 503.02,415.10 511.98,415.10 515.28,411.80 515.28,411.80 518.58,415.10 527.54,415.10 530.84,411.80 530.84,399.60" fill="#b8f8c8"/>
<path d="M468.60,399.00 L468.60,411.80 L471.90,415.10 L480.86,415.10 L484.16,411.80 L487.46,415.10 L496.42,415.10 L499.72,411.80 L503.02,415.10 L511.98,415.10 L515.28,411.80 L518.58,415.10 L527.54,415.10 L530.84,411.80 L530.84,399.00" fill="none" stroke="#2a3440" stroke-width="1.1"/>
<line x1="499.72" y1="399.00" x2="499.72" y2="411.80" stroke="#2a3440" stroke-width="1.1"/>
<text x="476.38" y="409.95" font-size="8.2" text-anchor="middle" fill="#10203a" stroke="#10203a" stroke-width="0.4">25</text>
<text x="491.94" y="409.95" font-size="8.2" text-anchor="middle" fill="#10203a" stroke="#10203a" stroke-width="0.4">26</text>
<text x="507.50" y="409.95" font-size="8.2" text-anchor="middle" fill="#10203a" stroke="#10203a" stroke-width="0.4">27</text>
<text x="523.06" y="409.95" font-size="8.2" text-anchor="middle" fill="#10203a" stroke="#10203a" stroke-width="0.4">28</text>
<polygon points="51.90,422.90 51.90,435.10 55.20,438.40 64.16,438.40 67.46,435.10 67.46,435.10 70.76,438.40 79.72,438.40 83.02,435.10 83.02,422.90" fill="#b8f8c8"/>
<path d="M51.90,422.30 L51.90,435.10 L55.20,438.40 L64.16,438.40 L67.46,435.10 L70.76,438.40 L79.72,438.40 L83.02,435.10 L83.02,422.30" fill="none" stroke="#2a3440" stroke-width="1.1"/>
<text x="59.68" y="433.25" font-size="8.2" text-anchor="middle" fill="#10203a" stroke="#10203a" stroke-width="0.4">1</text>
<text x="75.24" y="433.25" font-size="8.2" text-anchor="middle" fill="#10203a" stroke="#10203a" stroke-width="0.4">2</text>
<polygon points="83.02,422.90 83.02,435.10 86.32,438.40 95.28,438.40 98.58,435.10 98.58,435.10 101.88,438.40 110.84,438.40 114.14,435.10 114.14,435.10 117.44,438.40 126.40,438.40 129.70,435.10 129.70,435.10 133.00,438.40 141.96,438.40 145.26,435.10 145.26,435.10 148.56,438.40 157.52,438.40 160.82,435.10 160.82,435.10 164.12,438.40 173.08,438.40 176.38,435.10 176.38,435.10 179.68,438.40 188.64,438.40 191.94,435.10 191.94,435.10 195.24,438.40 204.20,438.40 207.50,435.10 207.50,422.90" fill="#00eeee"/>
<path d="M83.02,422.30 L83.02,435.10 L86.32,438.40 L95.28,438.40 L98.58,435.10 L101.88,438.40 L110.84,438.40 L114.14,435.10 L117.44,438.40 L126.40,438.40 L129.70,435.10 L133.00,438.40 L141.96,438.40 L145.26,435.10 L148.56,438.40 L157.52,438.40 L160.82,435.10 L164.12,438.40 L173.08,438.40 L176.38,435.10 L179.68,438.40 L188.64,438.40 L191.94,435.10 L195.24,438.40 L204.20,438.40 L207.50,435.10 L207.50,422.30" fill="none" stroke="#2a3440" stroke-width="1.1"/>
<line x1="98.58" y1="422.30" x2="98.58" y2="435.10" stroke="#2a3440" stroke-width="1.1"/>
<line x1="114.14" y1="422.30" x2="114.14" y2="435.10" stroke="#2a3440" stroke-width="1.1"/>
<line x1="129.70" y1="422.30" x2="129.70" y2="435.10" stroke="#2a3440" stroke-width="1.1"/>
<line x1="145.26" y1="422.30" x2="145.26" y2="435.10" stroke="#2a3440" stroke-width="1.1"/>
<line x1="160.82" y1="422.30" x2="160.82" y2="435.10" stroke="#2a3440" stroke-width="1.1"/>
<line x1="176.38" y1="422.30" x2="176.38" y2="435.10" stroke="#2a3440" stroke-width="1.1"/>
<line x1="191.94" y1="422.30" x2="191.94" y2="435.10" stroke="#2a3440" stroke-width="1.1"/>
<text x="90.80" y="433.25" font-size="8.2" text-anchor="middle" fill="#10203a" stroke="#10203a" stroke-width="0.4">3</text>
<text x="106.36" y="433.25" font-size="8.2" text-anchor="middle" fill="#10203a" stroke="#10203a" stroke-width="0.4">4</text>
<text x="121.92" y="433.25" font-size="8.2" text-anchor="middle" fill="#10203a" stroke="#10203a" stroke-width="0.4">5</text>
<text x="137.48" y="433.25" font-size="8.2" text-anchor="middle" fill="#10203a" stroke="#10203a" stroke-width="0.4">6</text>
<text x="153.04" y="433.25" font-size="8.2" text-anchor="middle" fill="#10203a" stroke="#10203a" stroke-width="0.4">7</text>
<text x="168.60" y="433.25" font-size="8.2" text-anchor="middle" fill="#10203a" stroke="#10203a" stroke-width="0.4">8</text>
<text x="184.16" y="433.25" font-size="8.2" text-anchor="middle" fill="#10203a" stroke="#10203a" stroke-width="0.4">9</text>
<text x="199.72" y="433.25" font-size="8.2" text-anchor="middle" fill="#10203a" stroke="#10203a" stroke-width="0.4">10</text>
<polygon points="207.50,422.90 207.50,435.10 210.80,438.40 219.76,438.40 223.06,435.10 223.06,435.10 226.36,438.40 235.32,438.40 238.62,435.10 238.62,422.90" fill="#b8f8c8"/>
<path d="M207.50,422.30 L207.50,435.10 L210.80,438.40 L219.76,438.40 L223.06,435.10 L226.36,438.40 L235.32,438.40 L238.62,435.10 L238.62,422.30" fill="none" stroke="#2a3440" stroke-width="1.1"/>
<text x="215.28" y="433.25" font-size="8.2" text-anchor="middle" fill="#10203a" stroke="#10203a" stroke-width="0.4">11</text>
<text x="230.84" y="433.25" font-size="8.2" text-anchor="middle" fill="#10203a" stroke="#10203a" stroke-width="0.4">12</text>
<polygon points="238.62,422.90 238.62,435.10 241.92,438.40 250.88,438.40 254.18,435.10 254.18,435.10 257.48,438.40 266.44,438.40 269.74,435.10 269.74,435.10 273.04,438.40 282.00,438.40 285.30,435.10 285.30,435.10 288.60,438.40 297.56,438.40 300.86,435.10 300.86,435.10 304.16,438.40 313.12,438.40 316.42,435.10 316.42,435.10 319.72,438.40 328.68,438.40 331.98,435.10 331.98,435.10 335.28,438.40 344.24,438.40 347.54,435.10 347.54,435.10 350.84,438.40 359.80,438.40 363.10,435.10 363.10,435.10 366.40,438.40 375.36,438.40 378.66,435.10 378.66,435.10 381.96,438.40 390.92,438.40 394.22,435.10 394.22,435.10 397.52,438.40 406.48,438.40 409.78,435.10 409.78,435.10 413.08,438.40 422.04,438.40 425.34,435.10 425.34,435.10 428.64,438.40 437.60,438.40 440.90,435.10 440.90,435.10 444.20,438.40 453.16,438.40 456.46,435.10 456.46,435.10 459.76,438.40 468.72,438.40 472.02,435.10 472.02,435.10 475.32,438.40 484.28,438.40 487.58,435.10 487.58,435.10 490.88,438.40 499.84,438.40 503.14,435.10 503.14,422.90" fill="#00eeee"/>
<path d="M238.62,422.30 L238.62,435.10 L241.92,438.40 L250.88,438.40 L254.18,435.10 L257.48,438.40 L266.44,438.40 L269.74,435.10 L273.04,438.40 L282.00,438.40 L285.30,435.10 L288.60,438.40 L297.56,438.40 L300.86,435.10 L304.16,438.40 L313.12,438.40 L316.42,435.10 L319.72,438.40 L328.68,438.40 L331.98,435.10 L335.28,438.40 L344.24,438.40 L347.54,435.10 L350.84,438.40 L359.80,438.40 L363.10,435.10 L366.40,438.40 L375.36,438.40 L378.66,435.10 L381.96,438.40 L390.92,438.40 L394.22,435.10 L397.52,438.40 L406.48,438.40 L409.78,435.10 L413.08,438.40 L422.04,438.40 L425.34,435.10 L428.64,438.40 L437.60,438.40 L440.90,435.10 L444.20,438.40 L453.16,438.40 L456.46,435.10 L459.76,438.40 L468.72,438.40 L472.02,435.10 L475.32,438.40 L484.28,438.40 L487.58,435.10 L490.88,438.40 L499.84,438.40 L503.14,435.10 L503.14,422.30" fill="none" stroke="#2a3440" stroke-width="1.1"/>
<line x1="254.18" y1="422.30" x2="254.18" y2="435.10" stroke="#2a3440" stroke-width="1.1"/>
<line x1="269.74" y1="422.30" x2="269.74" y2="435.10" stroke="#2a3440" stroke-width="1.1"/>
<line x1="285.30" y1="422.30" x2="285.30" y2="435.10" stroke="#2a3440" stroke-width="1.1"/>
<line x1="300.86" y1="422.30" x2="300.86" y2="435.10" stroke="#2a3440" stroke-width="1.1"/>
<line x1="316.42" y1="422.30" x2="316.42" y2="435.10" stroke="#2a3440" stroke-width="1.1"/>
<line x1="331.98" y1="422.30" x2="331.98" y2="435.10" stroke="#2a3440" stroke-width="1.1"/>
<line x1="347.54" y1="422.30" x2="347.54" y2="435.10" stroke="#2a3440" stroke-width="1.1"/>
<line x1="363.10" y1="422.30" x2="363.10" y2="435.10" stroke="#2a3440" stroke-width="1.1"/>
<line x1="378.66" y1="422.30" x2="378.66" y2="435.10" stroke="#2a3440" stroke-width="1.1"/>
<line x1="394.22" y1="422.30" x2="394.22" y2="435.10" stroke="#2a3440" stroke-width="1.1"/>
<line x1="409.78" y1="422.30" x2="409.78" y2="435.10" stroke="#2a3440" stroke-width="1.1"/>
<line x1="425.34" y1="422.30" x2="425.34" y2="435.10" stroke="#2a3440" stroke-width="1.1"/>
<line x1="440.90" y1="422.30" x2="440.90" y2="435.10" stroke="#2a3440" stroke-width="1.1"/>
<line x1="456.46" y1="422.30" x2="456.46" y2="435.10" stroke="#2a3440" stroke-width="1.1"/>
<line x1="472.02" y1="422.30" x2="472.02" y2="435.10" stroke="#2a3440" stroke-width="1.1"/>
<line x1="487.58" y1="422.30" x2="487.58" y2="435.10" stroke="#2a3440" stroke-width="1.1"/>
<text x="246.40" y="433.25" font-size="8.2" text-anchor="middle" fill="#10203a" stroke="#10203a" stroke-width="0.4">13</text>
<text x="261.96" y="433.25" font-size="8.2" text-anchor="middle" fill="#10203a" stroke="#10203a" stroke-width="0.4">14</text>
<text x="277.52" y="433.25" font-size="8.2" text-anchor="middle" fill="#10203a" stroke="#10203a" stroke-width="0.4">15</text>
<text x="293.08" y="433.25" font-size="8.2" text-anchor="middle" fill="#10203a" stroke="#10203a" stroke-width="0.4">16</text>
<text x="308.64" y="433.25" font-size="8.2" text-anchor="middle" fill="#10203a" stroke="#10203a" stroke-width="0.4">17</text>
<text x="324.20" y="433.25" font-size="8.2" text-anchor="middle" fill="#10203a" stroke="#10203a" stroke-width="0.4">18</text>
<text x="339.76" y="433.25" font-size="8.2" text-anchor="middle" fill="#10203a" stroke="#10203a" stroke-width="0.4">19</text>
<text x="355.32" y="433.25" font-size="8.2" text-anchor="middle" fill="#10203a" stroke="#10203a" stroke-width="0.4">20</text>
<text x="370.88" y="433.25" font-size="8.2" text-anchor="middle" fill="#10203a" stroke="#10203a" stroke-width="0.4">21</text>
<text x="386.44" y="433.25" font-size="8.2" text-anchor="middle" fill="#10203a" stroke="#10203a" stroke-width="0.4">22</text>
<text x="402.00" y="433.25" font-size="8.2" text-anchor="middle" fill="#10203a" stroke="#10203a" stroke-width="0.4">23</text>
<text x="417.56" y="433.25" font-size="8.2" text-anchor="middle" fill="#10203a" stroke="#10203a" stroke-width="0.4">24</text>
<text x="433.12" y="433.25" font-size="8.2" text-anchor="middle" fill="#10203a" stroke="#10203a" stroke-width="0.4">25</text>
<text x="448.68" y="433.25" font-size="8.2" text-anchor="middle" fill="#10203a" stroke="#10203a" stroke-width="0.4">26</text>
<text x="464.24" y="433.25" font-size="8.2" text-anchor="middle" fill="#10203a" stroke="#10203a" stroke-width="0.4">27</text>
<text x="479.80" y="433.25" font-size="8.2" text-anchor="middle" fill="#10203a" stroke="#10203a" stroke-width="0.4">28</text>
<text x="495.36" y="433.25" font-size="8.2" text-anchor="middle" fill="#10203a" stroke="#10203a" stroke-width="0.4">29</text>
<polygon points="503.14,422.90 503.14,435.10 506.44,438.40 515.40,438.40 518.70,435.10 518.70,435.10 522.00,438.40 530.96,438.40 534.26,435.10 534.26,422.90" fill="#b8f8c8"/>
<path d="M503.14,422.30 L503.14,435.10 L506.44,438.40 L515.40,438.40 L518.70,435.10 L522.00,438.40 L530.96,438.40 L534.26,435.10 L534.26,422.30" fill="none" stroke="#2a3440" stroke-width="1.1"/>
<text x="510.92" y="433.25" font-size="8.2" text-anchor="middle" fill="#10203a" stroke="#10203a" stroke-width="0.4">30</text>
<text x="526.48" y="433.25" font-size="8.2" text-anchor="middle" fill="#10203a" stroke="#10203a" stroke-width="0.4">31</text>
<polygon points="99.10,460.80 99.10,472.50 102.40,475.80 111.36,475.80 114.66,472.50 114.66,472.50 117.96,475.80 126.92,475.80 130.22,472.50 130.22,460.80" fill="#00cccc"/>
<path d="M99.10,460.20 L99.10,472.50 L102.40,475.80 L111.36,475.80 L114.66,472.50 L117.96,475.80 L126.92,475.80 L130.22,472.50 L130.22,460.20" fill="none" stroke="#2a3440" stroke-width="1.1"/>
<line x1="114.66" y1="460.20" x2="114.66" y2="472.50" stroke="#2a3440" stroke-width="1.1"/>
<text x="106.88" y="470.30" font-size="8" text-anchor="middle" fill="#10203a" stroke="#10203a" stroke-width="0.4">1</text>
<text x="122.44" y="470.30" font-size="8" text-anchor="middle" fill="#10203a" stroke="#10203a" stroke-width="0.4">2</text>
<polygon points="145.78,460.80 145.78,472.50 149.08,475.80 158.04,475.80 161.34,472.50 161.34,472.50 164.64,475.80 173.60,475.80 176.90,472.50 176.90,460.80" fill="#00cccc"/>
<path d="M145.78,460.20 L145.78,472.50 L149.08,475.80 L158.04,475.80 L161.34,472.50 L164.64,475.80 L173.60,475.80 L176.90,472.50 L176.90,460.20" fill="none" stroke="#2a3440" stroke-width="1.1"/>
<line x1="161.34" y1="460.20" x2="161.34" y2="472.50" stroke="#2a3440" stroke-width="1.1"/>
<text x="153.56" y="470.30" font-size="8" text-anchor="middle" fill="#10203a" stroke="#10203a" stroke-width="0.4">3</text>
<text x="169.12" y="470.30" font-size="8" text-anchor="middle" fill="#10203a" stroke="#10203a" stroke-width="0.4">4</text>
<circle cx="215.80" cy="468.30" r="2.0" fill="#2c2c78"/>
<circle cx="231.36" cy="468.30" r="2.0" fill="#2c2c78"/>
<polygon points="254.70,460.80 254.70,472.50 258.00,475.80 266.96,475.80 270.26,472.50 270.26,472.50 273.56,475.80 282.52,475.80 285.82,472.50 285.82,460.80" fill="#00cccc"/>
<path d="M254.70,460.20 L254.70,472.50 L258.00,475.80 L266.96,475.80 L270.26,472.50 L273.56,475.80 L282.52,475.80 L285.82,472.50 L285.82,460.20" fill="none" stroke="#2a3440" stroke-width="1.1"/>
<line x1="270.26" y1="460.20" x2="270.26" y2="472.50" stroke="#2a3440" stroke-width="1.1"/>
<text x="262.48" y="470.30" font-size="8" text-anchor="middle" fill="#10203a" stroke="#10203a" stroke-width="0.4">7</text>
<text x="278.04" y="470.30" font-size="8" text-anchor="middle" fill="#10203a" stroke="#10203a" stroke-width="0.4">8</text>
<circle cx="309.16" cy="468.30" r="2.0" fill="#2c2c78"/>
<circle cx="324.72" cy="468.30" r="2.0" fill="#2c2c78"/>
<circle cx="355.84" cy="468.30" r="2.0" fill="#2c2c78"/>
<circle cx="371.40" cy="468.30" r="2.0" fill="#2c2c78"/>
<polygon points="410.30,460.80 410.30,472.50 413.60,475.80 422.56,475.80 425.86,472.50 425.86,472.50 429.16,475.80 438.12,475.80 441.42,472.50 441.42,460.80" fill="#00cccc"/>
<path d="M410.30,460.20 L410.30,472.50 L413.60,475.80 L422.56,475.80 L425.86,472.50 L429.16,475.80 L438.12,475.80 L441.42,472.50 L441.42,460.20" fill="none" stroke="#2a3440" stroke-width="1.1"/>
<line x1="425.86" y1="460.20" x2="425.86" y2="472.50" stroke="#2a3440" stroke-width="1.1"/>
<text x="418.08" y="470.30" font-size="8" text-anchor="middle" fill="#10203a" stroke="#10203a" stroke-width="0.4">13</text>
<text x="433.64" y="470.30" font-size="8" text-anchor="middle" fill="#10203a" stroke="#10203a" stroke-width="0.4">14</text>
<polygon points="456.98,460.80 456.98,472.50 460.28,475.80 469.24,475.80 472.54,472.50 472.54,472.50 475.84,475.80 484.80,475.80 488.10,472.50 488.10,460.80" fill="#00cccc"/>
<path d="M456.98,460.20 L456.98,472.50 L460.28,475.80 L469.24,475.80 L472.54,472.50 L475.84,475.80 L484.80,475.80 L488.10,472.50 L488.10,460.20" fill="none" stroke="#2a3440" stroke-width="1.1"/>
<line x1="472.54" y1="460.20" x2="472.54" y2="472.50" stroke="#2a3440" stroke-width="1.1"/>
<text x="464.76" y="470.30" font-size="8" text-anchor="middle" fill="#10203a" stroke="#10203a" stroke-width="0.4">15</text>
<text x="480.32" y="470.30" font-size="8" text-anchor="middle" fill="#10203a" stroke="#10203a" stroke-width="0.4">16</text>
<polygon points="99.10,484.00 99.10,495.70 102.40,499.00 111.36,499.00 114.66,495.70 114.66,495.70 117.96,499.00 126.92,499.00 130.22,495.70 130.22,484.00" fill="#00cccc"/>
<path d="M99.10,483.40 L99.10,495.70 L102.40,499.00 L111.36,499.00 L114.66,495.70 L117.96,499.00 L126.92,499.00 L130.22,495.70 L130.22,483.40" fill="none" stroke="#2a3440" stroke-width="1.1"/>
<line x1="114.66" y1="483.40" x2="114.66" y2="495.70" stroke="#2a3440" stroke-width="1.1"/>
<text x="106.88" y="493.50" font-size="8" text-anchor="middle" fill="#10203a" stroke="#10203a" stroke-width="0.4">1</text>
<text x="122.44" y="493.50" font-size="8" text-anchor="middle" fill="#10203a" stroke="#10203a" stroke-width="0.4">2</text>
<polygon points="145.78,484.00 145.78,495.70 149.08,499.00 158.04,499.00 161.34,495.70 161.34,495.70 164.64,499.00 173.60,499.00 176.90,495.70 176.90,484.00" fill="#00cccc"/>
<path d="M145.78,483.40 L145.78,495.70 L149.08,499.00 L158.04,499.00 L161.34,495.70 L164.64,499.00 L173.60,499.00 L176.90,495.70 L176.90,483.40" fill="none" stroke="#2a3440" stroke-width="1.1"/>
<line x1="161.34" y1="483.40" x2="161.34" y2="495.70" stroke="#2a3440" stroke-width="1.1"/>
<text x="153.56" y="493.50" font-size="8" text-anchor="middle" fill="#10203a" stroke="#10203a" stroke-width="0.4">3</text>
<text x="169.12" y="493.50" font-size="8" text-anchor="middle" fill="#10203a" stroke="#10203a" stroke-width="0.4">4</text>
<polygon points="208.02,484.00 208.02,495.70 211.32,499.00 220.28,499.00 223.58,495.70 223.58,495.70 226.88,499.00 235.84,499.00 239.14,495.70 239.14,484.00" fill="#00cccc"/>
<path d="M208.02,483.40 L208.02,495.70 L211.32,499.00 L220.28,499.00 L223.58,495.70 L226.88,499.00 L235.84,499.00 L239.14,495.70 L239.14,483.40" fill="none" stroke="#2a3440" stroke-width="1.1"/>
<line x1="223.58" y1="483.40" x2="223.58" y2="495.70" stroke="#2a3440" stroke-width="1.1"/>
<text x="215.80" y="493.50" font-size="8" text-anchor="middle" fill="#10203a" stroke="#10203a" stroke-width="0.4">5</text>
<text x="231.36" y="493.50" font-size="8" text-anchor="middle" fill="#10203a" stroke="#10203a" stroke-width="0.4">6</text>
<polygon points="254.70,484.00 254.70,495.70 258.00,499.00 266.96,499.00 270.26,495.70 270.26,495.70 273.56,499.00 282.52,499.00 285.82,495.70 285.82,484.00" fill="#00cccc"/>
<path d="M254.70,483.40 L254.70,495.70 L258.00,499.00 L266.96,499.00 L270.26,495.70 L273.56,499.00 L282.52,499.00 L285.82,495.70 L285.82,483.40" fill="none" stroke="#2a3440" stroke-width="1.1"/>
<line x1="270.26" y1="483.40" x2="270.26" y2="495.70" stroke="#2a3440" stroke-width="1.1"/>
<text x="262.48" y="493.50" font-size="8" text-anchor="middle" fill="#10203a" stroke="#10203a" stroke-width="0.4">7</text>
<text x="278.04" y="493.50" font-size="8" text-anchor="middle" fill="#10203a" stroke="#10203a" stroke-width="0.4">8</text>
<polygon points="301.38,484.00 301.38,495.70 304.68,499.00 313.64,499.00 316.94,495.70 316.94,495.70 320.24,499.00 329.20,499.00 332.50,495.70 332.50,484.00" fill="#00cccc"/>
<path d="M301.38,483.40 L301.38,495.70 L304.68,499.00 L313.64,499.00 L316.94,495.70 L320.24,499.00 L329.20,499.00 L332.50,495.70 L332.50,483.40" fill="none" stroke="#2a3440" stroke-width="1.1"/>
<line x1="316.94" y1="483.40" x2="316.94" y2="495.70" stroke="#2a3440" stroke-width="1.1"/>
<text x="309.16" y="493.50" font-size="8" text-anchor="middle" fill="#10203a" stroke="#10203a" stroke-width="0.4">9</text>
<text x="324.72" y="493.50" font-size="8" text-anchor="middle" fill="#10203a" stroke="#10203a" stroke-width="0.4">10</text>
<polygon points="348.06,484.00 348.06,495.70 351.36,499.00 360.32,499.00 363.62,495.70 363.62,495.70 366.92,499.00 375.88,499.00 379.18,495.70 379.18,484.00" fill="#00cccc"/>
<path d="M348.06,483.40 L348.06,495.70 L351.36,499.00 L360.32,499.00 L363.62,495.70 L366.92,499.00 L375.88,499.00 L379.18,495.70 L379.18,483.40" fill="none" stroke="#2a3440" stroke-width="1.1"/>
<line x1="363.62" y1="483.40" x2="363.62" y2="495.70" stroke="#2a3440" stroke-width="1.1"/>
<text x="355.84" y="493.50" font-size="8" text-anchor="middle" fill="#10203a" stroke="#10203a" stroke-width="0.4">11</text>
<text x="371.40" y="493.50" font-size="8" text-anchor="middle" fill="#10203a" stroke="#10203a" stroke-width="0.4">12</text>
<polygon points="410.30,484.00 410.30,495.70 413.60,499.00 422.56,499.00 425.86,495.70 425.86,495.70 429.16,499.00 438.12,499.00 441.42,495.70 441.42,484.00" fill="#00cccc"/>
<path d="M410.30,483.40 L410.30,495.70 L413.60,499.00 L422.56,499.00 L425.86,495.70 L429.16,499.00 L438.12,499.00 L441.42,495.70 L441.42,483.40" fill="none" stroke="#2a3440" stroke-width="1.1"/>
<line x1="425.86" y1="483.40" x2="425.86" y2="495.70" stroke="#2a3440" stroke-width="1.1"/>
<text x="418.08" y="493.50" font-size="8" text-anchor="middle" fill="#10203a" stroke="#10203a" stroke-width="0.4">13</text>
<text x="433.64" y="493.50" font-size="8" text-anchor="middle" fill="#10203a" stroke="#10203a" stroke-width="0.4">14</text>
<polygon points="456.98,484.00 456.98,495.70 460.28,499.00 469.24,499.00 472.54,495.70 472.54,495.70 475.84,499.00 484.80,499.00 488.10,495.70 488.10,484.00" fill="#00cccc"/>
<path d="M456.98,483.40 L456.98,495.70 L460.28,499.00 L469.24,499.00 L472.54,495.70 L475.84,499.00 L484.80,499.00 L488.10,495.70 L488.10,483.40" fill="none" stroke="#2a3440" stroke-width="1.1"/>
<line x1="472.54" y1="483.40" x2="472.54" y2="495.70" stroke="#2a3440" stroke-width="1.1"/>
<text x="464.76" y="493.50" font-size="8" text-anchor="middle" fill="#10203a" stroke="#10203a" stroke-width="0.4">15</text>
<text x="480.32" y="493.50" font-size="8" text-anchor="middle" fill="#10203a" stroke="#10203a" stroke-width="0.4">16</text>
<polygon points="99.10,507.30 99.10,519.00 102.40,522.30 111.36,522.30 114.66,519.00 114.66,519.00 117.96,522.30 126.92,522.30 130.22,519.00 130.22,507.30" fill="#00cccc"/>
<path d="M99.10,506.70 L99.10,519.00 L102.40,522.30 L111.36,522.30 L114.66,519.00 L117.96,522.30 L126.92,522.30 L130.22,519.00 L130.22,506.70" fill="none" stroke="#2a3440" stroke-width="1.1"/>
<line x1="114.66" y1="506.70" x2="114.66" y2="519.00" stroke="#2a3440" stroke-width="1.1"/>
<text x="106.88" y="516.80" font-size="8" text-anchor="middle" fill="#10203a" stroke="#10203a" stroke-width="0.4">1</text>
<text x="122.44" y="516.80" font-size="8" text-anchor="middle" fill="#10203a" stroke="#10203a" stroke-width="0.4">2</text>
<polygon points="145.78,507.30 145.78,519.00 149.08,522.30 158.04,522.30 161.34,519.00 161.34,519.00 164.64,522.30 173.60,522.30 176.90,519.00 176.90,507.30" fill="#00cccc"/>
<path d="M145.78,506.70 L145.78,519.00 L149.08,522.30 L158.04,522.30 L161.34,519.00 L164.64,522.30 L173.60,522.30 L176.90,519.00 L176.90,506.70" fill="none" stroke="#2a3440" stroke-width="1.1"/>
<line x1="161.34" y1="506.70" x2="161.34" y2="519.00" stroke="#2a3440" stroke-width="1.1"/>
<text x="153.56" y="516.80" font-size="8" text-anchor="middle" fill="#10203a" stroke="#10203a" stroke-width="0.4">3</text>
<text x="169.12" y="516.80" font-size="8" text-anchor="middle" fill="#10203a" stroke="#10203a" stroke-width="0.4">4</text>
<polygon points="208.02,507.30 208.02,519.00 211.32,522.30 220.28,522.30 223.58,519.00 223.58,519.00 226.88,522.30 235.84,522.30 239.14,519.00 239.14,507.30" fill="#00cccc"/>
<path d="M208.02,506.70 L208.02,519.00 L211.32,522.30 L220.28,522.30 L223.58,519.00 L226.88,522.30 L235.84,522.30 L239.14,519.00 L239.14,506.70" fill="none" stroke="#2a3440" stroke-width="1.1"/>
<line x1="223.58" y1="506.70" x2="223.58" y2="519.00" stroke="#2a3440" stroke-width="1.1"/>
<text x="215.80" y="516.80" font-size="8" text-anchor="middle" fill="#10203a" stroke="#10203a" stroke-width="0.4">5</text>
<text x="231.36" y="516.80" font-size="8" text-anchor="middle" fill="#10203a" stroke="#10203a" stroke-width="0.4">6</text>
<polygon points="254.70,507.30 254.70,519.00 258.00,522.30 266.96,522.30 270.26,519.00 270.26,519.00 273.56,522.30 282.52,522.30 285.82,519.00 285.82,507.30" fill="#00cccc"/>
<path d="M254.70,506.70 L254.70,519.00 L258.00,522.30 L266.96,522.30 L270.26,519.00 L273.56,522.30 L282.52,522.30 L285.82,519.00 L285.82,506.70" fill="none" stroke="#2a3440" stroke-width="1.1"/>
<line x1="270.26" y1="506.70" x2="270.26" y2="519.00" stroke="#2a3440" stroke-width="1.1"/>
<text x="262.48" y="516.80" font-size="8" text-anchor="middle" fill="#10203a" stroke="#10203a" stroke-width="0.4">7</text>
<text x="278.04" y="516.80" font-size="8" text-anchor="middle" fill="#10203a" stroke="#10203a" stroke-width="0.4">8</text>
<polygon points="301.38,507.30 301.38,519.00 304.68,522.30 313.64,522.30 316.94,519.00 316.94,519.00 320.24,522.30 329.20,522.30 332.50,519.00 332.50,507.30" fill="#00cccc"/>
<path d="M301.38,506.70 L301.38,519.00 L304.68,522.30 L313.64,522.30 L316.94,519.00 L320.24,522.30 L329.20,522.30 L332.50,519.00 L332.50,506.70" fill="none" stroke="#2a3440" stroke-width="1.1"/>
<line x1="316.94" y1="506.70" x2="316.94" y2="519.00" stroke="#2a3440" stroke-width="1.1"/>
<text x="309.16" y="516.80" font-size="8" text-anchor="middle" fill="#10203a" stroke="#10203a" stroke-width="0.4">9</text>
<text x="324.72" y="516.80" font-size="8" text-anchor="middle" fill="#10203a" stroke="#10203a" stroke-width="0.4">10</text>
<polygon points="348.06,507.30 348.06,519.00 351.36,522.30 360.32,522.30 363.62,519.00 363.62,519.00 366.92,522.30 375.88,522.30 379.18,519.00 379.18,507.30" fill="#00cccc"/>
<path d="M348.06,506.70 L348.06,519.00 L351.36,522.30 L360.32,522.30 L363.62,519.00 L366.92,522.30 L375.88,522.30 L379.18,519.00 L379.18,506.70" fill="none" stroke="#2a3440" stroke-width="1.1"/>
<line x1="363.62" y1="506.70" x2="363.62" y2="519.00" stroke="#2a3440" stroke-width="1.1"/>
<text x="355.84" y="516.80" font-size="8" text-anchor="middle" fill="#10203a" stroke="#10203a" stroke-width="0.4">11</text>
<text x="371.40" y="516.80" font-size="8" text-anchor="middle" fill="#10203a" stroke="#10203a" stroke-width="0.4">12</text>
<polygon points="410.30,507.30 410.30,519.00 413.60,522.30 422.56,522.30 425.86,519.00 425.86,519.00 429.16,522.30 438.12,522.30 441.42,519.00 441.42,507.30" fill="#00cccc"/>
<path d="M410.30,506.70 L410.30,519.00 L413.60,522.30 L422.56,522.30 L425.86,519.00 L429.16,522.30 L438.12,522.30 L441.42,519.00 L441.42,506.70" fill="none" stroke="#2a3440" stroke-width="1.1"/>
<line x1="425.86" y1="506.70" x2="425.86" y2="519.00" stroke="#2a3440" stroke-width="1.1"/>
<text x="418.08" y="516.80" font-size="8" text-anchor="middle" fill="#10203a" stroke="#10203a" stroke-width="0.4">13</text>
<text x="433.64" y="516.80" font-size="8" text-anchor="middle" fill="#10203a" stroke="#10203a" stroke-width="0.4">14</text>
<polygon points="456.98,507.30 456.98,519.00 460.28,522.30 469.24,522.30 472.54,519.00 472.54,519.00 475.84,522.30 484.80,522.30 488.10,519.00 488.10,507.30" fill="#00cccc"/>
<path d="M456.98,506.70 L456.98,519.00 L460.28,522.30 L469.24,522.30 L472.54,519.00 L475.84,522.30 L484.80,522.30 L488.10,519.00 L488.10,506.70" fill="none" stroke="#2a3440" stroke-width="1.1"/>
<line x1="472.54" y1="506.70" x2="472.54" y2="519.00" stroke="#2a3440" stroke-width="1.1"/>
<text x="464.76" y="516.80" font-size="8" text-anchor="middle" fill="#10203a" stroke="#10203a" stroke-width="0.4">15</text>
<text x="480.32" y="516.80" font-size="8" text-anchor="middle" fill="#10203a" stroke="#10203a" stroke-width="0.4">16</text>
<polygon points="99.10,530.60 99.10,542.30 102.40,545.60 111.36,545.60 114.66,542.30 114.66,542.30 117.96,545.60 126.92,545.60 130.22,542.30 130.22,530.60" fill="#00cccc"/>
<path d="M99.10,530.00 L99.10,542.30 L102.40,545.60 L111.36,545.60 L114.66,542.30 L117.96,545.60 L126.92,545.60 L130.22,542.30 L130.22,530.00" fill="none" stroke="#2a3440" stroke-width="1.1"/>
<line x1="114.66" y1="530.00" x2="114.66" y2="542.30" stroke="#2a3440" stroke-width="1.1"/>
<text x="106.88" y="540.10" font-size="8" text-anchor="middle" fill="#10203a" stroke="#10203a" stroke-width="0.4">1</text>
<text x="122.44" y="540.10" font-size="8" text-anchor="middle" fill="#10203a" stroke="#10203a" stroke-width="0.4">2</text>
<polygon points="145.78,530.60 145.78,542.30 149.08,545.60 158.04,545.60 161.34,542.30 161.34,542.30 164.64,545.60 173.60,545.60 176.90,542.30 176.90,530.60" fill="#00cccc"/>
<path d="M145.78,530.00 L145.78,542.30 L149.08,545.60 L158.04,545.60 L161.34,542.30 L164.64,545.60 L173.60,545.60 L176.90,542.30 L176.90,530.00" fill="none" stroke="#2a3440" stroke-width="1.1"/>
<line x1="161.34" y1="530.00" x2="161.34" y2="542.30" stroke="#2a3440" stroke-width="1.1"/>
<text x="153.56" y="540.10" font-size="8" text-anchor="middle" fill="#10203a" stroke="#10203a" stroke-width="0.4">3</text>
<text x="169.12" y="540.10" font-size="8" text-anchor="middle" fill="#10203a" stroke="#10203a" stroke-width="0.4">4</text>
<polygon points="410.30,530.60 410.30,542.30 413.60,545.60 422.56,545.60 425.86,542.30 425.86,542.30 429.16,545.60 438.12,545.60 441.42,542.30 441.42,530.60" fill="#00cccc"/>
<path d="M410.30,530.00 L410.30,542.30 L413.60,545.60 L422.56,545.60 L425.86,542.30 L429.16,545.60 L438.12,545.60 L441.42,542.30 L441.42,530.00" fill="none" stroke="#2a3440" stroke-width="1.1"/>
<line x1="425.86" y1="530.00" x2="425.86" y2="542.30" stroke="#2a3440" stroke-width="1.1"/>
<text x="418.08" y="540.10" font-size="8" text-anchor="middle" fill="#10203a" stroke="#10203a" stroke-width="0.4">5</text>
<text x="433.64" y="540.10" font-size="8" text-anchor="middle" fill="#10203a" stroke="#10203a" stroke-width="0.4">6</text>
<polygon points="456.98,530.60 456.98,542.30 460.28,545.60 469.24,545.60 472.54,542.30 472.54,542.30 475.84,545.60 484.80,545.60 488.10,542.30 488.10,530.60" fill="#00cccc"/>
<path d="M456.98,530.00 L456.98,542.30 L460.28,545.60 L469.24,545.60 L472.54,542.30 L475.84,545.60 L484.80,545.60 L488.10,542.30 L488.10,530.00" fill="none" stroke="#2a3440" stroke-width="1.1"/>
<line x1="472.54" y1="530.00" x2="472.54" y2="542.30" stroke="#2a3440" stroke-width="1.1"/>
<text x="464.76" y="540.10" font-size="8" text-anchor="middle" fill="#10203a" stroke="#10203a" stroke-width="0.4">7</text>
<text x="480.32" y="540.10" font-size="8" text-anchor="middle" fill="#10203a" stroke="#10203a" stroke-width="0.4">8</text>
</svg>

<!-- right panel -->
<div class="btn" style="left:581px;top:169px;width:52px;height:24px;border-radius:4px"></div>
<svg class="a" style="left:750px;top:171px" width="21" height="21" viewBox="0 0 21 21"><path d="M3.5,3.5 L17.5,17.5 M17.5,3.5 L3.5,17.5" stroke="#ff3a28" stroke-width="5" stroke-linecap="round"/></svg>
<div class="a" style="left:570px;top:477px;width:214px;height:1px;background:#c8c8c8"></div>
<div class="btn" style="left:581px;top:489px;width:56px;height:54px"></div>
<div class="btn" style="left:651px;top:489px;width:56px;height:54px"></div>
<div class="btn" style="left:721px;top:489px;width:56px;height:54px"></div>
<div class="btn" style="left:581px;top:551px;width:56px;height:55px"></div>
<div class="btn" style="left:721px;top:551px;width:56px;height:55px"></div>
<svg class="a" style="left:590px;top:503px" width="38" height="26" viewBox="0 0 38 26">
<rect x="1.25" y="1" width="35" height="23.5" fill="#555"/>
<path d="M8,3.3 H29 A4.5,4.5 0 0 0 33.6,7.8 V17.8 A4.5,4.5 0 0 0 29,22.3 H8 A4.5,4.5 0 0 0 3.5,17.8 V7.8 A4.5,4.5 0 0 0 8,3.3 Z" fill="#efefef"/>
<ellipse cx="18.75" cy="12" rx="5.3" ry="6.6" fill="#efefef" stroke="#555" stroke-width="2.2"/>
<path d="M16.2,10.2 L19.2,7.6 V15.6 M16.4,16 H21.8" stroke="#555" stroke-width="2.2" fill="none"/>
</svg>
<svg class="a" style="left:665px;top:491px" width="28" height="22" viewBox="0 0 28 22">
<rect x="1.2" y="1.2" width="25.6" height="19.6" rx="2.5" fill="none" stroke="#555" stroke-width="2.4"/>
<rect x="1" y="5" width="26" height="4.5" fill="#555"/>
<rect x="5" y="14.5" width="3" height="1.6" fill="#555"/><rect x="9.5" y="14.5" width="4" height="1.6" fill="#555"/>
</svg>
<svg class="a" style="left:734px;top:505px" width="30" height="23" viewBox="0 0 30 23">
<rect x="1.2" y="1.2" width="27.6" height="20.6" rx="2.5" fill="none" stroke="#555" stroke-width="2.4"/>
<rect x="1" y="5.5" width="28" height="4.5" fill="#555"/>
<rect x="5" y="15.5" width="3" height="1.6" fill="#555"/><rect x="9.5" y="15.5" width="4" height="1.6" fill="#555"/>
</svg>
<svg class="a" style="left:593px;top:566px" width="30" height="25" viewBox="0 0 30 25">
<path d="M4,1 H20 V13 Q20,18 15,18 H9 Q4,18 4,13 Z" fill="#555"/>
<path d="M20,3 H22 Q26,3 26,7.5 Q26,12 22,12 H20 V9.5 H22 Q23.5,9.5 23.5,7.5 Q23.5,5.5 22,5.5 H20 Z" fill="#555"/>
<path d="M1,20.5 H28 Q27,24 22,24 H7 Q2,24 1,20.5 Z" fill="#555"/>
</svg>
<svg class="a" style="left:735px;top:564px" width="26" height="28" viewBox="0 0 26 28">
<rect x="1.5" y="4.5" width="23" height="22" fill="none" stroke="#555" stroke-width="2.2"/>
<rect x="1.5" y="4.5" width="23" height="5" fill="#555"/>
<rect x="5.5" y="1" width="3" height="6" rx="1.5" fill="#555" stroke="#efefef" stroke-width="1"/>
<rect x="17.5" y="1" width="3" height="6" rx="1.5" fill="#555" stroke="#efefef" stroke-width="1"/>
<path d="M7,10 V26 M12.5,10 V26 M18,10 V26 M2,15 H24 M2,20.5 H24" stroke="#555" stroke-width="1.3"/>
</svg>
<div class="a" style="left:14px;top:612px;width:770px;height:2px;background:#d0d0d0"></div>

<!-- bottom -->
<svg class="a" style="left:0;top:600px" width="220" height="60" viewBox="0 600 220 60">
 <g fill="none" stroke="#ff3a2a" stroke-width="1.2">
  <circle cx="42.8" cy="645.8" r="5.6"/><circle cx="73.5" cy="645.8" r="5.6"/><circle cx="105" cy="645.8" r="5.6"/><circle cx="136" cy="645.8" r="5.6"/>
 </g>
 <g font-family="Liberation Sans" font-size="9" fill="#ff3a2a" text-anchor="middle">
  <text x="42.8" y="648.9">1</text><text x="73.5" y="648.9">2</text><text x="105" y="648.9">3</text><text x="136" y="648.9">4</text>
 </g>
 <path d="M161,647.5 H174 M167.5,641 V654" stroke="#ff3a2a" stroke-width="1.3"/>
 <path d="M190.5,644.5 H197" stroke="#ff3a2a" stroke-width="1.3"/>
</svg>
<div class="btn" style="left:216px;top:632px;width:28px;height:24px"></div>
<div class="btn" style="left:251px;top:632px;width:28px;height:24px"></div>
<div class="btn" style="left:286px;top:632px;width:101px;height:24px"></div>
<div class="btn" style="left:391px;top:632px;width:66px;height:24px"></div>
<div class="btn" style="left:461px;top:632px;width:51px;height:24px"></div>
<div class="btn" style="left:604px;top:632px;width:64px;height:24px"></div>
<div class="btn" style="left:671px;top:632px;width:55px;height:24px"></div>
<div class="btn" style="left:729px;top:632px;width:51px;height:24px"></div>
<svg class="a" style="left:377px;top:635px" width="9" height="6" viewBox="0 0 9 6"><path d="M1,5 L4.5,1.5 L8,5" fill="none" stroke="#222" stroke-width="1.6"/></svg>
<svg class="a" style="left:446px;top:635px" width="9" height="6" viewBox="0 0 9 6"><path d="M1,5 L4.5,1.5 L8,5" fill="none" stroke="#222" stroke-width="1.6"/></svg>
<svg class="a" style="left:657px;top:635px" width="9" height="6" viewBox="0 0 9 6"><path d="M1,5 L4.5,1.5 L8,5" fill="none" stroke="#222" stroke-width="1.6"/></svg>
<svg class="a" style="left:0;top:0" width="800" height="691" viewBox="0 0 800 691">
<g fill="#ff3a28">
<polygon points="560.6,620 569.6,628.5 569.6,634.5 562.6,628 562.6,641.2 558.6,641.2 558.6,628 551.6,634.5 551.6,628.5"/>
<polygon points="560.6,669 569.6,660.5 569.6,654.5 562.6,661 562.6,647.8 558.6,647.8 558.6,661 551.6,654.5 551.6,660.5"/>
<polygon points="522,645.8 530.5,636.8 536.5,636.8 530,643.8 544,643.8 544,647.8 530,647.8 536.5,654.8 530.5,654.8"/>
<polygon points="598.5,645.8 590,636.8 584,636.8 590.5,643.8 576.6,643.8 576.6,647.8 590.5,647.8 584,654.8 590,654.8"/>
</g></svg>

<!-- status bar -->
<div class="a" style="left:1px;top:674px;width:798px;height:15px;background:#f0f0f0"></div>
<div class="a" style="left:1px;top:674px;width:798px;height:1px;background:#f6f6f6"></div>
<div class="a" style="left:1px;top:676px;width:798px;height:1px;background:#dedede"></div>
<div class="a" style="left:1px;top:689px;width:798px;height:1px;background:#fcfcfc"></div>
<div class="a" style="left:708px;top:677px;width:1px;height:12px;background:#dcdcdc"></div>
<div class="a" style="left:732px;top:677px;width:1px;height:12px;background:#dcdcdc"></div>
<div class="a" style="left:785px;top:677px;width:1px;height:12px;background:#dcdcdc"></div>
<svg class="a" style="left:788px;top:679px" width="10" height="10" viewBox="0 0 10 10"><g fill="#b4b4b4"><rect x="7" y="1" width="1.5" height="1.5"/><rect x="4" y="4" width="1.5" height="1.5"/><rect x="7" y="4" width="1.5" height="1.5"/><rect x="1" y="7" width="1.5" height="1.5"/><rect x="4" y="7" width="1.5" height="1.5"/><rect x="7" y="7" width="1.5" height="1.5"/></g></svg>
<div class="t" style="left:22.90px;top:6.46px;font-size:10.8px;color:#000;font-weight:400;transform:scaleX(0.8127);transform-origin:0 0;-webkit-text-stroke:0.15px #000;">Front Office Sinema - [SiTec]</div>
<div class="t" style="left:28.00px;top:27.24px;font-size:9.4px;color:#000;font-weight:400;transform:scaleX(0.8908);transform-origin:0 0;-webkit-text-stroke:0.2px #000;">Datei</div>
<div class="t" style="left:59.50px;top:27.24px;font-size:9.4px;color:#000;font-weight:400;transform:scaleX(0.9094);transform-origin:0 0;-webkit-text-stroke:0.2px #000;">Bearbeiten</div>
<div class="t" style="left:112.40px;top:27.24px;font-size:9.4px;color:#000;font-weight:400;transform:scaleX(0.9138);transform-origin:0 0;-webkit-text-stroke:0.2px #000;">Ansicht</div>
<div class="t" style="left:151.70px;top:27.24px;font-size:9.4px;color:#000;font-weight:400;transform:scaleX(0.9553);transform-origin:0 0;-webkit-text-stroke:0.2px #000;">Abrechnung</div>
<div class="t" style="left:211.40px;top:27.24px;font-size:9.4px;color:#000;font-weight:400;transform:scaleX(0.8963);transform-origin:0 0;-webkit-text-stroke:0.2px #000;">Verkauf</div>
<div class="t" style="left:252.60px;top:27.24px;font-size:9.4px;color:#000;font-weight:400;transform:scaleX(0.9234);transform-origin:0 0;-webkit-text-stroke:0.2px #000;">Hilfsprogramme</div>
<div class="t" style="left:325.00px;top:27.24px;font-size:9.4px;color:#000;font-weight:400;transform:scaleX(0.8466);transform-origin:0 0;-webkit-text-stroke:0.2px #000;">Extras</div>
<div class="t" style="left:358.70px;top:27.24px;font-size:9.4px;color:#000;font-weight:400;transform:scaleX(0.8837);transform-origin:0 0;-webkit-text-stroke:0.2px #000;">Fenster</div>
<div class="t" style="left:397.50px;top:27.24px;font-size:9.4px;color:#000;font-weight:400;transform:scaleX(0.9581);transform-origin:0 0;-webkit-text-stroke:0.2px #000;">?</div>
<svg class="a" style="left:15px;top:47px" width="23" height="26" viewBox="0 0 23 26"><defs><linearGradient id="gdoc" x1="0" y1="0" x2="1" y2="1"><stop offset="0" stop-color="#d6e4f4"/><stop offset="1" stop-color="#f8fbff"/></linearGradient></defs>
<path d="M2,1.5 H15 L21,7.5 V24.5 H2 Z" fill="url(#gdoc)" stroke="#7f96b4" stroke-width="1.2"/>
<path d="M15,1.5 V7.5 H21" fill="#fff" stroke="#8aa0bc" stroke-width="1"/></svg>
<svg class="a" style="left:50px;top:47px" width="26" height="26" viewBox="0 0 26 26"><defs><linearGradient id="gfo" x1="0" y1="0" x2="0" y2="1"><stop offset="0" stop-color="#fff0a0"/><stop offset="0.35" stop-color="#fcd840"/><stop offset="1" stop-color="#f4c000"/></linearGradient></defs>
<path d="M2,7.5 Q2,6.8 3,6.8 H12.5 L14.5,8.8 H21 V24 H2 Z" fill="#f6b820" stroke="#d09010" stroke-width="0.6"/>
<path d="M2.2,24.5 L3.6,15.5 Q11,11.5 22.6,12.5 L21.6,24.5 Z" fill="url(#gfo)" stroke="#d8a010" stroke-width="0.6"/>
<path d="M7.5,6.5 Q14,0.5 19.2,9.2 L21.8,7.8 L18.8,16.2 L12.3,11.6 L15.3,10.9 Q12,5.8 7.5,6.5 Z" fill="#14a82c" stroke="#0a7a1c" stroke-width="0.6"/></svg>
<svg class="a" style="left:86px;top:47px" width="25" height="26" viewBox="0 0 25 26"><path d="M1.5,1.5 H21 L23.5,4 V24.5 H1.5 Z" fill="#4a8ad8" stroke="#2a5a9a" stroke-width="1.2"/>
<rect x="5.5" y="1.5" width="13" height="8" fill="#9a9a9a" stroke="#6a6a6a" stroke-width="0.8"/>
<rect x="14" y="3" width="2.5" height="4.5" fill="#444"/>
<rect x="4.5" y="12.5" width="16" height="12" fill="#e6f0fc" stroke="#9ab8e0" stroke-width="0.6"/>
<path d="M6.5,16 H18.5 M6.5,18.5 H18.5 M6.5,21 H18.5" stroke="#a8c4e8" stroke-width="0.8"/></svg>
<svg class="a" style="left:121px;top:47px" width="26" height="25" viewBox="0 0 26 25"><g fill="none" stroke="#a8a8a8" stroke-width="2">
<path d="M2,2 L14,15"/><path d="M8,1 L12,14"/>
<circle cx="20.5" cy="12" r="3.3"/><circle cx="12" cy="20" r="3.3"/></g>
<path d="M1.5,1.5 L13,14.5 L15,12.5 Z" fill="#e6e6e6" stroke="#a8a8a8" stroke-width="0.8"/></svg>
<svg class="a" style="left:157px;top:47px" width="25" height="26" viewBox="0 0 25 26"><path d="M2,1 H13 L18,6 V21 H2 Z" fill="#f0f0f0" stroke="#c0c0c0" stroke-width="1"/>
<path d="M7,5 H18 L23,10 V24 H7 Z" fill="#f6f6f6" stroke="#b8b8b8" stroke-width="1"/>
<path d="M9.5,12 H20 M9.5,14.5 H20 M9.5,17 H20 M9.5,19.5 H20" stroke="#d4d4d4" stroke-width="0.8"/></svg>
<svg class="a" style="left:193px;top:47px" width="25" height="26" viewBox="0 0 25 26"><rect x="2.5" y="2.5" width="16" height="20.5" rx="1.5" fill="#c8c8c8" stroke="#a8a8a8" stroke-width="1"/>
<rect x="7" y="1" width="7" height="3" fill="#8a8a8a"/>
<path d="M8.5,7 H18 L23,12 V24.5 H8.5 Z" fill="#f6f6f6" stroke="#b4b4b4" stroke-width="1"/>
<path d="M11,14 H20.5 M11,16.5 H20.5 M11,19 H20.5 M11,21.5 H20.5" stroke="#d6d6d6" stroke-width="0.8"/></svg>
<svg class="a" style="left:229px;top:47px" width="26" height="26" viewBox="0 0 26 26"><defs><linearGradient id="gund" x1="0" y1="0" x2="0" y2="1"><stop offset="0" stop-color="#b4b4b4"/><stop offset="1" stop-color="#8c8c8c"/></linearGradient></defs>
<path d="M1.2,3.1 L1.2,14.5 L12.8,14.5 Z" fill="url(#gund)"/>
<path d="M4,10.5 C8,2 20,0.5 24,10 C26.5,16 23,22 18.5,25 C20.5,20 21,14.5 18,11.5 C15,8.5 11,9.5 8.5,13 Z" fill="url(#gund)"/></svg>
<svg class="a" style="left:264px;top:47px" width="26" height="26" viewBox="0 0 26 26"><g transform="translate(26,0) scale(-1,1)"><defs><linearGradient id="gred" x1="0" y1="0" x2="0" y2="1"><stop offset="0" stop-color="#b4b4b4"/><stop offset="1" stop-color="#8c8c8c"/></linearGradient></defs>
<path d="M1.2,3.1 L1.2,14.5 L12.8,14.5 Z" fill="url(#gred)"/>
<path d="M4,10.5 C8,2 20,0.5 24,10 C26.5,16 23,22 18.5,25 C20.5,20 21,14.5 18,11.5 C15,8.5 11,9.5 8.5,13 Z" fill="url(#gred)"/></g></svg>
<svg class="a" style="left:300px;top:47px" width="28" height="26" viewBox="0 0 28 26"><path d="M2.5,8.5 H20 V24.5 H2.5 Z" fill="#dde8f6" stroke="#6a86aa" stroke-width="1"/>
<path d="M5,15 H17 M5,18 H17 M5,21 H17" stroke="#8aa4c8" stroke-width="0.8"/>
<path d="M4,10 Q8,4 14,4 H22 V13 H17 L12,17 Q9,16 11,13 L8,15 Q5,14 7,12 L5,12.5 Q3,11.5 4,10 Z" fill="#f4c490" stroke="#b88450" stroke-width="0.7"/>
<rect x="21.5" y="2.5" width="4.5" height="11" rx="1" fill="#1a3ab0"/></svg>
<svg class="a" style="left:337px;top:47px" width="25" height="25" viewBox="0 0 25 25"><defs><radialGradient id="gpz" cx="0.5" cy="0.45" r="0.6"><stop offset="0" stop-color="#10c010"/><stop offset="0.7" stop-color="#30c030"/><stop offset="1" stop-color="#60d060"/></radialGradient></defs>
<path d="M6.7,7.1 H10.6 V4 Q10.6,1.6 14.2,1.6 Q17.8,1.6 17.8,4 V7.1 H23 V12.4 Q19.7,12.4 19.7,14.3 Q19.7,16.2 23,16.2 V22.7 H16.5 V20.5 Q16.5,18.3 14.25,18.3 Q12,18.3 12,20.5 V22.7 H6.7 V17 H4 Q1.5,17 1.5,13.5 Q1.5,10 4,10 H6.7 Z" fill="url(#gpz)" stroke="#1a8a1a" stroke-width="1"/></svg>
<svg class="a" style="left:379px;top:50px" width="24" height="20" viewBox="0 0 24 20"><rect x="1" y="1.5" width="22" height="17" fill="#fff" stroke="#7a8aa0" stroke-width="1"/>
<circle cx="8" cy="7.5" r="3.2" fill="#6a6a6a"/>
<path d="M2.5,17 Q2.5,11.5 8,11.5 Q13.5,11.5 13.5,17 Z" fill="#e84a20"/>
<rect x="14.5" y="5" width="6.5" height="2.5" fill="#8ab4e8"/><rect x="14.5" y="10.5" width="6.5" height="5" fill="#8aa4cc"/></svg>
<svg class="a" style="left:415px;top:48px" width="26" height="25" viewBox="0 0 26 25"><rect x="1" y="1.5" width="21" height="18" fill="#fff" stroke="#7a8aa0" stroke-width="1"/>
<rect x="1" y="1.5" width="21" height="3" fill="#3a7ae0"/>
<rect x="3" y="6.5" width="7" height="2" fill="#f08040"/><rect x="8" y="10" width="9" height="2" fill="#50c050"/>
<rect x="3" y="13" width="7" height="2" fill="#3a7ae0"/><rect x="5" y="16" width="6" height="2" fill="#f06030"/>
<text x="13.5" y="17" font-size="13" font-weight="bold" fill="#333" font-family="Liberation Sans">5</text>
<circle cx="19" cy="19.5" r="4.5" fill="#fff" stroke="#8a9ab0" stroke-width="1"/>
<path d="M19,17 V19.8 H21" stroke="#333" stroke-width="0.8" fill="none"/></svg>
<svg class="a" style="left:452px;top:48px" width="25" height="25" viewBox="0 0 25 25"><circle cx="13.5" cy="11.5" r="10" fill="#8a98a8" stroke="#4a5866" stroke-width="1"/>
<circle cx="13.5" cy="11.5" r="8.5" fill="#c4ccd6"/>
<g fill="#3a4654"><circle cx="13.5" cy="5.5" r="2.4"/><circle cx="19.2" cy="9.6" r="2.4"/><circle cx="17" cy="16.5" r="2.4"/><circle cx="10" cy="16.5" r="2.4"/><circle cx="7.8" cy="9.6" r="2.4"/></g>
<circle cx="13.5" cy="11.5" r="1" fill="#3a4654"/>
<path d="M5,17 L2,22 L6,23.5 L9,19 Z" fill="#c84a2a"/></svg>
<svg class="a" style="left:496px;top:48px" width="19" height="25" viewBox="0 0 19 25"><path d="M4.4,8.2 Q4.4,3.3 9.4,3.3 Q14.4,3.3 14.4,8 Q14.4,11 11.6,12.8 Q9.8,14 9.8,16.8" fill="none" stroke="#f8b800" stroke-width="4.4"/>
<rect x="7.2" y="18.3" width="5" height="4.8" fill="#f8b800"/></svg>
<div class="t" style="left:27.10px;top:108.05px;font-size:14px;color:#8a8a8a;font-weight:400;transform:scaleX(0.8419);transform-origin:0 0;-webkit-text-stroke:0.2px #f0f0f0;">Kino</div>
<div class="t" style="left:58.30px;top:108.05px;font-size:14px;color:#8a8a8a;font-weight:400;-webkit-text-stroke:0.2px #f0f0f0;">1</div>
<div class="t" style="left:135.40px;top:108.25px;font-size:14px;color:#8a8a8a;font-weight:400;transform:scaleX(1.0072);transform-origin:0 0;-webkit-text-stroke:0.2px #f0f0f0;">18:15</div>
<div class="t" style="left:241.00px;top:108.15px;font-size:14px;color:#8a8a8a;font-weight:400;transform:scaleX(0.9403);transform-origin:0 0;-webkit-text-stroke:0.2px #f0f0f0;">Ice Age 4: Continental Drift 3D Digital OV</div>
<div class="t" style="left:514.50px;top:104.82px;font-size:13.5px;color:#8a8a8a;font-weight:400;transform:scaleX(0.9356);transform-origin:0 0;-webkit-text-stroke:0.2px #f0f0f0;">TL</div>
<div class="t" style="left:585.00px;top:108.25px;font-size:14px;color:#8a8a8a;font-weight:400;transform:scaleX(1.0244);transform-origin:0 0;-webkit-text-stroke:0.2px #f0f0f0;">Mo 23.10</div>
<div class="t" style="left:22.25px;top:131.40px;font-size:13px;color:#8c8c8c;font-weight:400;transform:scaleX(0.8963);transform-origin:0 0;-webkit-text-stroke:0.15px #fff;">SiTec</div>
<div class="t" style="left:243.75px;top:131.50px;font-size:13px;color:#8c8c8c;font-weight:400;transform:scaleX(0.9542);transform-origin:0 0;-webkit-text-stroke:0.15px #fff;">12943</div>
<div class="t" style="left:581.00px;top:131.40px;font-size:13px;color:#8c8c8c;font-weight:400;transform:scaleX(0.8963);transform-origin:0 0;-webkit-text-stroke:0.15px #fff;">SiTec</div>
<div class="t" style="left:750.50px;top:131.60px;font-size:13px;color:#5a5a5a;font-weight:400;transform:scaleX(0.9279);transform-origin:0 0;">10:27</div>
<svg class="a" style="left:112px;top:121px" width="9" height="6" viewBox="0 0 9 6"><path d="M1,1 L4.5,4.5 L8,1" fill="none" stroke="#333" stroke-width="1.6"/></svg>
<svg class="a" style="left:219px;top:121px" width="9" height="6" viewBox="0 0 9 6"><path d="M1,1 L4.5,4.5 L8,1" fill="none" stroke="#333" stroke-width="1.6"/></svg>
<svg class="a" style="left:494px;top:121px" width="9" height="6" viewBox="0 0 9 6"><path d="M1,1 L4.5,4.5 L8,1" fill="none" stroke="#333" stroke-width="1.6"/></svg>
<svg class="a" style="left:530px;top:121px" width="9" height="6" viewBox="0 0 9 6"><path d="M1,1 L4.5,4.5 L8,1" fill="none" stroke="#333" stroke-width="1.6"/></svg>
<svg class="a" style="left:669px;top:121px" width="9" height="6" viewBox="0 0 9 6"><path d="M1,1 L4.5,4.5 L8,1" fill="none" stroke="#333" stroke-width="1.6"/></svg>
<div class="t" style="left:58.00px;top:166.33px;font-size:20.4px;color:#ff5050;font-weight:400;transform:scaleX(0.8821);transform-origin:0 0;-webkit-text-stroke:0.5px #fff;">Kino</div>
<div class="t" style="left:108.60px;top:166.33px;font-size:20.4px;color:#ff5050;font-weight:400;-webkit-text-stroke:0.5px #fff;">1</div>
<div class="t" style="left:266.40px;top:172.47px;font-size:14.8px;color:#4a4a4a;font-weight:400;transform:scaleX(0.9091);transform-origin:0 0;-webkit-text-stroke:0.2px #fff;">Bildwand</div>
<div class="t" style="left:30.20px;top:208.56px;font-size:12.8px;color:#1e2832;font-weight:400;-webkit-text-stroke:0.15px #80ccff;">1</div>
<div class="t" style="left:30.20px;top:231.86px;font-size:12.8px;color:#1e2832;font-weight:400;-webkit-text-stroke:0.15px #80ccff;">2</div>
<div class="t" style="left:30.20px;top:253.76px;font-size:12.8px;color:#1e2832;font-weight:400;-webkit-text-stroke:0.15px #00ccff;">3</div>
<div class="t" style="left:30.20px;top:277.06px;font-size:12.8px;color:#1e2832;font-weight:400;-webkit-text-stroke:0.15px #00ccff;">4</div>
<div class="t" style="left:30.20px;top:300.36px;font-size:12.8px;color:#1e2832;font-weight:400;-webkit-text-stroke:0.15px #00ccff;">5</div>
<div class="t" style="left:30.20px;top:323.66px;font-size:12.8px;color:#1e2832;font-weight:400;-webkit-text-stroke:0.15px #00ccff;">6</div>
<div class="t" style="left:30.20px;top:352.76px;font-size:12.8px;color:#1e2832;font-weight:400;-webkit-text-stroke:0.15px #00ccff;">7</div>
<div class="t" style="left:30.20px;top:376.06px;font-size:12.8px;color:#1e2832;font-weight:400;-webkit-text-stroke:0.15px #00ccff;">8</div>
<div class="t" style="left:30.20px;top:399.36px;font-size:12.8px;color:#1e2832;font-weight:400;-webkit-text-stroke:0.15px #00ccff;">9</div>
<div class="t" style="left:30.20px;top:422.66px;font-size:12.8px;color:#1e2832;font-weight:400;transform:scaleX(0.8430);transform-origin:0 0;-webkit-text-stroke:0.15px #00eeee;">10</div>
<div class="t" style="left:30.20px;top:459.16px;font-size:12.8px;color:#1e2832;font-weight:400;transform:scaleX(0.7746);transform-origin:0 0;-webkit-text-stroke:0.15px #00cccc;">11</div>
<div class="t" style="left:30.20px;top:482.36px;font-size:12.8px;color:#1e2832;font-weight:400;transform:scaleX(0.7236);transform-origin:0 0;-webkit-text-stroke:0.15px #00cccc;">12</div>
<div class="t" style="left:30.20px;top:505.66px;font-size:12.8px;color:#1e2832;font-weight:400;transform:scaleX(0.7236);transform-origin:0 0;-webkit-text-stroke:0.15px #00cccc;">13</div>
<div class="t" style="left:30.20px;top:528.96px;font-size:12.8px;color:#1e2832;font-weight:400;transform:scaleX(0.7236);transform-origin:0 0;-webkit-text-stroke:0.15px #00cccc;">14</div>
<div class="t" style="left:29.70px;top:579.52px;font-size:13.8px;color:#8c8c8c;font-weight:400;transform:scaleX(0.9976);transform-origin:0 0;-webkit-text-stroke:0.3px #fff;">2 Karten 13,00</div>
<div class="t" style="left:585.00px;top:173.10px;font-size:15px;color:#808080;font-weight:400;transform:scaleX(0.8892);transform-origin:0 0;-webkit-text-stroke:0.2px #f0f0f0;">Datum:</div>
<div class="t" style="left:639.60px;top:173.10px;font-size:15px;color:#8c8c8c;font-weight:400;transform:scaleX(0.8258);transform-origin:0 0;-webkit-text-stroke:0.3px #fff;">23.10.2017</div>
<div class="t" style="left:581.00px;top:210.17px;font-size:12.2px;color:#8c8c8c;font-weight:400;transform:scaleX(0.9535);transform-origin:0 0;-webkit-text-stroke:0.25px #fff;">Zeit:</div>
<div class="t" style="left:640.30px;top:210.17px;font-size:12.2px;color:#8c8c8c;font-weight:400;transform:scaleX(0.9836);transform-origin:0 0;-webkit-text-stroke:0.25px #fff;">18:15</div>
<div class="t" style="left:684.00px;top:210.17px;font-size:12.2px;color:#8c8c8c;font-weight:400;-webkit-text-stroke:0.25px #fff;">-</div>
<div class="t" style="left:710.40px;top:210.17px;font-size:12.2px;color:#8c8c8c;font-weight:400;transform:scaleX(1.0033);transform-origin:0 0;-webkit-text-stroke:0.25px #fff;">19:43</div>
<div class="t" style="left:581.00px;top:230.37px;font-size:12.2px;color:#8c8c8c;font-weight:400;transform:scaleX(1.0397);transform-origin:0 0;-webkit-text-stroke:0.25px #fff;">Titel:</div>
<div class="t" style="left:640.00px;top:230.37px;font-size:12.2px;color:#8c8c8c;font-weight:400;transform:scaleX(0.9839);transform-origin:0 0;-webkit-text-stroke:0.25px #fff;">Ice Age 4: Continental Dri</div>
<div class="t" style="left:640.00px;top:249.27px;font-size:12.2px;color:#8c8c8c;font-weight:400;transform:scaleX(1.0097);transform-origin:0 0;-webkit-text-stroke:0.25px #fff;">ab 6 Jahren</div>
<div class="t" style="left:640.00px;top:268.37px;font-size:12.2px;color:#8c8c8c;font-weight:400;transform:scaleX(0.9432);transform-origin:0 0;-webkit-text-stroke:0.25px #fff;">3D OV</div>
<div class="t" style="left:581.00px;top:291.67px;font-size:12.2px;color:#8c8c8c;font-weight:400;transform:scaleX(0.9969);transform-origin:0 0;-webkit-text-stroke:0.25px #fff;">Kat.:</div>
<div class="t" style="left:639.50px;top:291.67px;font-size:12.2px;color:#8c8c8c;font-weight:400;-webkit-text-stroke:0.25px #fff;">2</div>
<div class="t" style="left:581.00px;top:311.37px;font-size:12.2px;color:#8c8c8c;font-weight:400;transform:scaleX(0.9933);transform-origin:0 0;-webkit-text-stroke:0.25px #fff;">Reihe:</div>
<div class="t" style="left:639.50px;top:311.37px;font-size:12.2px;color:#8c8c8c;font-weight:400;-webkit-text-stroke:0.25px #fff;">8</div>
<div class="t" style="left:581.00px;top:330.27px;font-size:12.2px;color:#8c8c8c;font-weight:400;transform:scaleX(0.9316);transform-origin:0 0;-webkit-text-stroke:0.25px #fff;">Platz:</div>
<div class="t" style="left:639.50px;top:330.27px;font-size:12.2px;color:#8c8c8c;font-weight:400;-webkit-text-stroke:0.25px #fff;">6-9</div>
<div class="t" style="left:581.00px;top:349.97px;font-size:12.2px;color:#8c8c8c;font-weight:400;transform:scaleX(0.9593);transform-origin:0 0;-webkit-text-stroke:0.25px #fff;">Anzahl:</div>
<div class="t" style="left:639.50px;top:349.97px;font-size:12.2px;color:#8c8c8c;font-weight:400;-webkit-text-stroke:0.25px #fff;">4</div>
<div class="t" style="left:581.00px;top:374.30px;font-size:9.1px;color:#8c8c8c;font-weight:400;transform:scaleX(1.0474);transform-origin:0 0;-webkit-text-stroke:0.15px #fff;">2*Normalpreis (6,50) | 2*Marketing (4,00)</div>
<div class="t" style="left:581.00px;top:405.10px;font-size:9.1px;color:#8c8c8c;font-weight:400;transform:scaleX(0.9897);transform-origin:0 0;-webkit-text-stroke:0.15px #fff;">Frei:</div>
<div class="t" style="left:643.50px;top:405.10px;font-size:9.1px;color:#8c8c8c;font-weight:400;transform:scaleX(1.1523);transform-origin:0 0;-webkit-text-stroke:0.15px #fff;">268</div>
<div class="t" style="left:679.00px;top:405.10px;font-size:9.1px;color:#8c8c8c;font-weight:400;transform:scaleX(0.9891);transform-origin:0 0;-webkit-text-stroke:0.15px #fff;">Verkauft/Res:</div>
<div class="t" style="left:755.00px;top:405.10px;font-size:9.1px;color:#8c8c8c;font-weight:400;transform:scaleX(1.0981);transform-origin:0 0;-webkit-text-stroke:0.15px #fff;">71 / 2</div>
<div class="t" style="left:581.50px;top:458.75px;font-size:12.7px;color:#8c8c8c;font-weight:400;transform:scaleX(0.8940);transform-origin:0 0;-webkit-text-stroke:0.25px #fff;">Preis:</div>
<div class="t" style="left:640.00px;top:458.75px;font-size:12.7px;color:#8c8c8c;font-weight:400;transform:scaleX(0.9513);transform-origin:0 0;-webkit-text-stroke:0.25px #fff;">4,00</div>
<div class="t" style="left:682.70px;top:458.55px;font-size:12.7px;color:#8c8c8c;font-weight:400;transform:scaleX(0.9921);transform-origin:0 0;-webkit-text-stroke:0.25px #fff;">21,00</div>
<div class="t" style="left:743.50px;top:458.98px;font-size:14.2px;color:#ff6a6a;font-weight:400;transform:scaleX(1.0136);transform-origin:0 0;-webkit-text-stroke:0.25px #fff;">21,00</div>
<div class="t" style="left:662.00px;top:517.72px;font-size:21px;color:#555;font-weight:400;transform:scaleX(0.9746);transform-origin:0 0;-webkit-text-stroke:0.2px #f0f0f0;">VIP</div>
<div class="t" style="left:33.60px;top:617.17px;font-size:12.2px;color:#8c8c8c;font-weight:400;transform:scaleX(0.9872);transform-origin:0 0;-webkit-text-stroke:0.25px #fff;">Kategorie / Anzahl:</div>
<div class="t" style="left:215.50px;top:617.17px;font-size:12.2px;color:#8c8c8c;font-weight:400;transform:scaleX(0.9530);transform-origin:0 0;-webkit-text-stroke:0.25px #fff;">Ermäßigung:</div>
<div class="t" style="left:222.50px;top:637.50px;font-size:13px;color:#ff5a5a;font-weight:400;transform:scaleX(0.7859);transform-origin:0 0;-webkit-text-stroke:0.12px #f0f0f0;">E1</div>
<div class="t" style="left:257.00px;top:637.50px;font-size:13px;color:#ff5a5a;font-weight:400;transform:scaleX(0.8959);transform-origin:0 0;-webkit-text-stroke:0.12px #f0f0f0;">E2</div>
<div class="t" style="left:291.25px;top:637.64px;font-size:12px;color:#7a7a7a;font-weight:400;transform:scaleX(0.8681);transform-origin:0 0;">Ermäßigung</div>
<div class="t" style="left:397.00px;top:637.64px;font-size:12px;color:#8c8c8c;font-weight:400;transform:scaleX(0.8977);transform-origin:0 0;-webkit-text-stroke:0.12px #f0f0f0;">Funktionen</div>
<div class="t" style="left:468.90px;top:637.64px;font-size:12px;color:#8c8c8c;font-weight:400;transform:scaleX(0.9208);transform-origin:0 0;-webkit-text-stroke:0.12px #f0f0f0;">Res. lö</div>
<div class="t" style="left:616.20px;top:637.64px;font-size:12px;color:#8c8c8c;font-weight:400;transform:scaleX(0.8761);transform-origin:0 0;-webkit-text-stroke:0.12px #f0f0f0;">Zahlung</div>
<div class="t" style="left:675.80px;top:637.64px;font-size:12px;color:#8c8c8c;font-weight:400;transform:scaleX(0.8828);transform-origin:0 0;-webkit-text-stroke:0.12px #f0f0f0;">Gegeben</div>
<div class="t" style="left:735.10px;top:637.64px;font-size:12px;color:#8c8c8c;font-weight:400;transform:scaleX(0.9188);transform-origin:0 0;-webkit-text-stroke:0.12px #f0f0f0;">Mehr&gt;&gt;</div>
<div class="t" style="left:696.60px;top:679.84px;font-size:8.7px;color:#6a6a6a;font-weight:400;transform:scaleX(0.8280);transform-origin:0 0;">UF</div>
<div class="t" style="left:710.90px;top:679.84px;font-size:8.7px;color:#1a1a1a;font-weight:700;transform:scaleX(0.9749);transform-origin:0 0;-webkit-text-stroke:0.2px #f0f0f0;">NUM</div>
<div class="t" style="left:734.70px;top:679.84px;font-size:8.7px;color:#1a1a1a;font-weight:700;transform:scaleX(0.8116);transform-origin:0 0;-webkit-text-stroke:0.2px #f0f0f0;">SiTec</div>
</body></html>
